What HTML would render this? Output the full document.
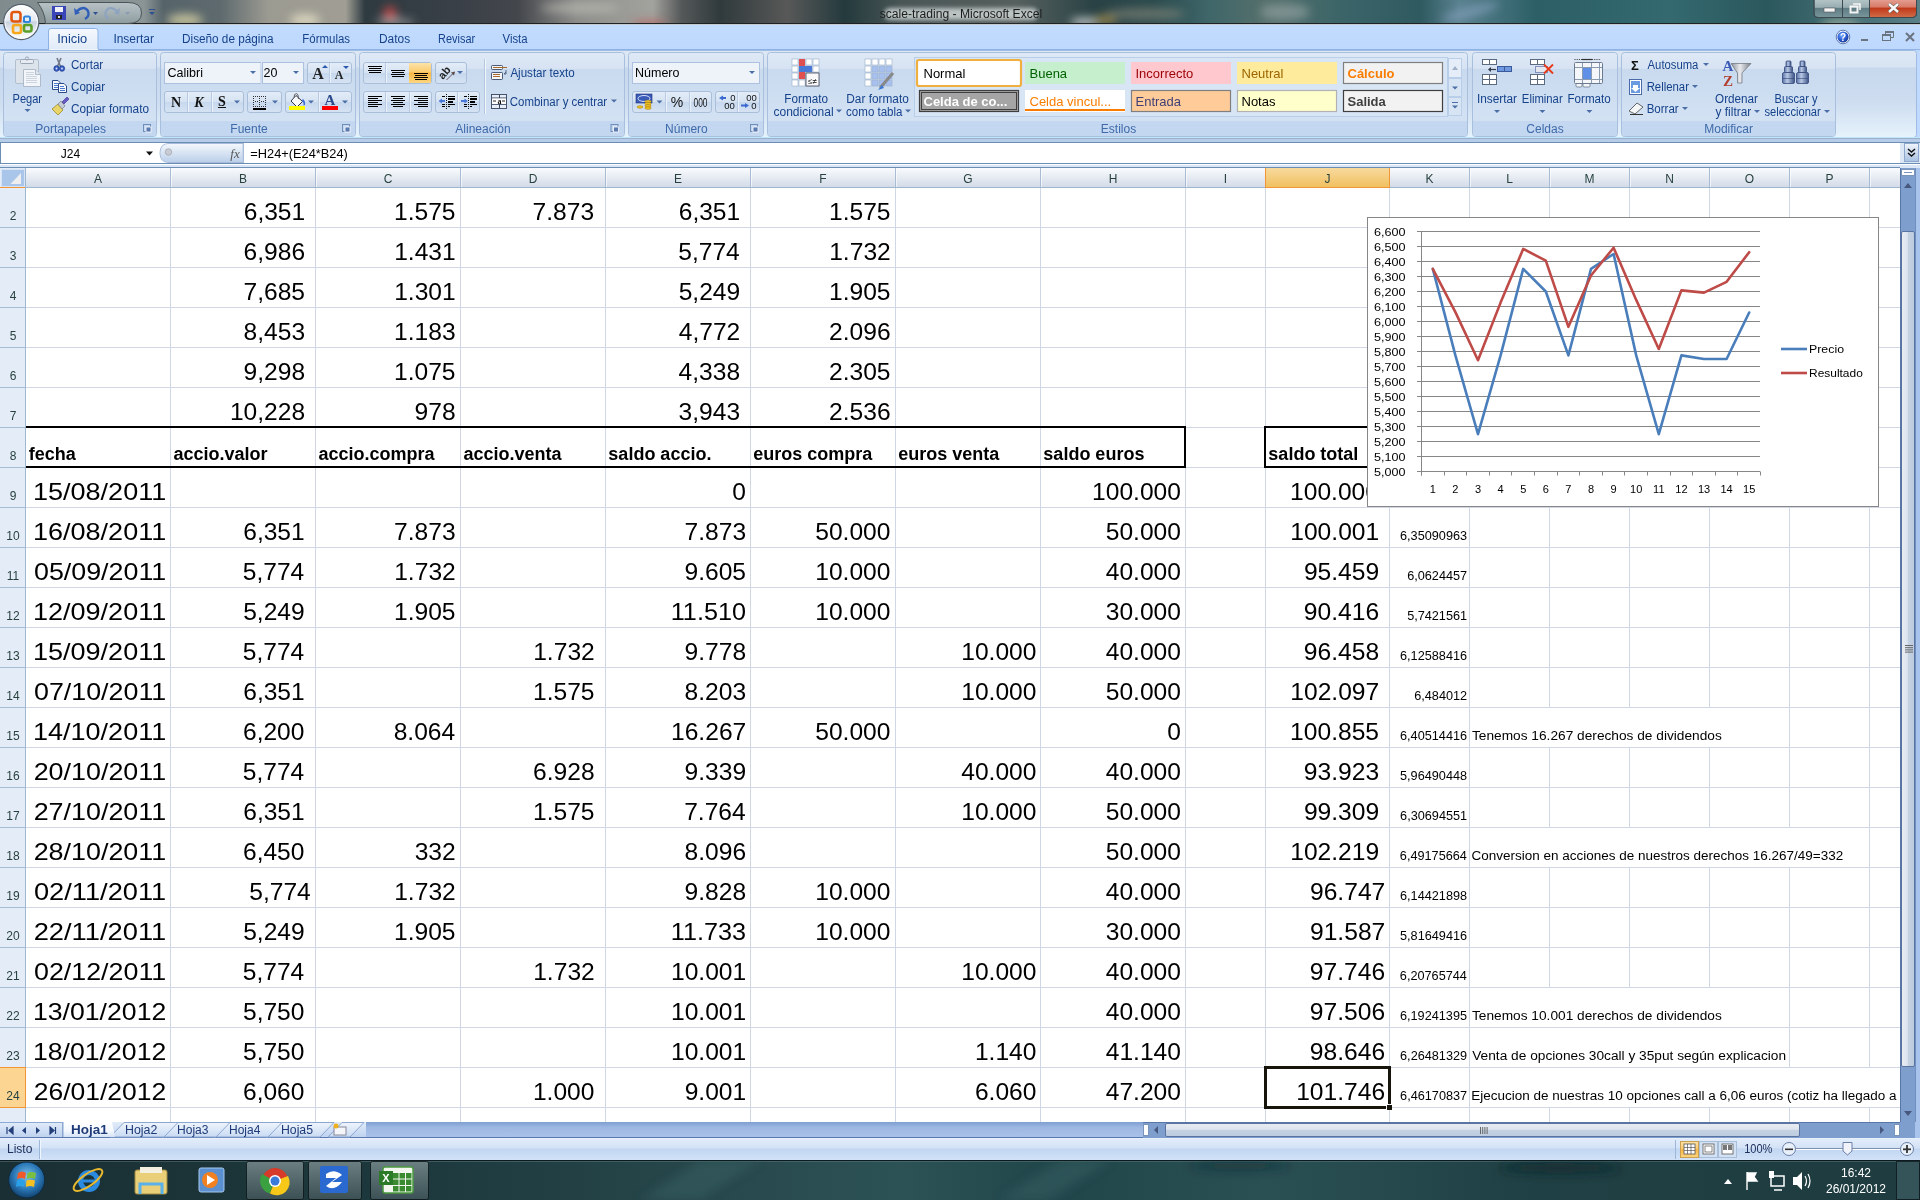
<!DOCTYPE html><html><head><meta charset="utf-8"><title>scale-trading - Microsoft Excel</title>
<style>html,body{margin:0;padding:0;width:1920px;height:1200px;overflow:hidden;background:#fff}svg{display:block;font-family:"Liberation Sans",sans-serif}</style></head><body>
<svg width="1920" height="1200" viewBox="0 0 1920 1200">
<defs>
<linearGradient id="gTitle" x1="0" y1="0" x2="1" y2="0">
 <stop offset="0" stop-color="#5f6b6d"/><stop offset="0.06" stop-color="#7d8888"/><stop offset="0.12" stop-color="#8d9490"/>
 <stop offset="0.2" stop-color="#3c4243"/><stop offset="0.3" stop-color="#4a4f50"/><stop offset="0.45" stop-color="#2b2f31"/>
 <stop offset="0.6" stop-color="#2a3a3d"/><stop offset="0.75" stop-color="#3c6a72"/><stop offset="0.85" stop-color="#356069"/>
 <stop offset="1" stop-color="#2a5058"/></linearGradient>
<linearGradient id="gGroup" x1="0" y1="0" x2="0" y2="1">
 <stop offset="0" stop-color="#DFE9F6"/><stop offset="0.19" stop-color="#D7E3F3"/><stop offset="0.2" stop-color="#C9DAEF"/>
 <stop offset="1" stop-color="#D6E4F4"/></linearGradient>
<linearGradient id="gTab" x1="0" y1="0" x2="0" y2="1">
 <stop offset="0" stop-color="#F5F9FE"/><stop offset="1" stop-color="#E0EAF7"/></linearGradient>
<linearGradient id="gColHdr" x1="0" y1="0" x2="0" y2="1">
 <stop offset="0" stop-color="#F9FBFD"/><stop offset="1" stop-color="#D3DBE8"/></linearGradient>
<linearGradient id="gColSel" x1="0" y1="0" x2="0" y2="1">
 <stop offset="0" stop-color="#F9DA9E"/><stop offset="1" stop-color="#F0C060"/></linearGradient>
<linearGradient id="gBox" x1="0" y1="0" x2="0" y2="1">
 <stop offset="0" stop-color="#F2F6FC"/><stop offset="1" stop-color="#E6EEF8"/></linearGradient>
<linearGradient id="gBtn" x1="0" y1="0" x2="0" y2="1">
 <stop offset="0" stop-color="#E4EDF8"/><stop offset="0.5" stop-color="#D5E2F2"/><stop offset="0.51" stop-color="#C7D8EE"/><stop offset="1" stop-color="#D6E3F3"/></linearGradient>
<linearGradient id="gOrange" x1="0" y1="0" x2="0" y2="1">
 <stop offset="0" stop-color="#FDE3A8"/><stop offset="0.45" stop-color="#FBCB6E"/><stop offset="0.5" stop-color="#F9B644"/><stop offset="1" stop-color="#FCD680"/></linearGradient>
<linearGradient id="gStatus" x1="0" y1="0" x2="0" y2="1">
 <stop offset="0" stop-color="#E4EEFB"/><stop offset="0.45" stop-color="#D3E2F6"/><stop offset="0.5" stop-color="#C1D6F2"/><stop offset="1" stop-color="#D2E2F7"/></linearGradient>
<linearGradient id="gSheetBar" x1="0" y1="0" x2="0" y2="1">
 <stop offset="0" stop-color="#A9C4E8"/><stop offset="1" stop-color="#97B6E0"/></linearGradient>
<linearGradient id="gThumbV" x1="0" y1="0" x2="1" y2="0">
 <stop offset="0" stop-color="#E9EDF2"/><stop offset="0.45" stop-color="#DDE4EE"/><stop offset="0.5" stop-color="#C5D2E3"/><stop offset="1" stop-color="#BCCBDF"/></linearGradient>
<linearGradient id="gThumbH" x1="0" y1="0" x2="0" y2="1">
 <stop offset="0" stop-color="#E9EDF2"/><stop offset="0.45" stop-color="#DDE4EE"/><stop offset="0.5" stop-color="#C5D2E3"/><stop offset="1" stop-color="#BCCBDF"/></linearGradient>
<linearGradient id="gTask" x1="0" y1="0" x2="1" y2="0">
 <stop offset="0" stop-color="#1a2f33"/><stop offset="0.22" stop-color="#1d393d"/><stop offset="0.38" stop-color="#28494d"/><stop offset="0.47" stop-color="#2c5256"/><stop offset="0.55" stop-color="#21464a"/><stop offset="0.66" stop-color="#2a5054"/><stop offset="0.8" stop-color="#1f4044"/><stop offset="1" stop-color="#1f3c40"/></linearGradient>
<linearGradient id="gTaskBtn" x1="0" y1="0" x2="0" y2="1">
 <stop offset="0" stop-color="#8e9ea0" stop-opacity="0.7"/><stop offset="1" stop-color="#4a5c60" stop-opacity="0.7"/></linearGradient>
<radialGradient id="gOrb" cx="0.5" cy="0.4" r="0.6">
 <stop offset="0" stop-color="#ffffff"/><stop offset="0.7" stop-color="#e8eef2"/><stop offset="1" stop-color="#a6b2bc"/></radialGradient>
<radialGradient id="gWinOrb" cx="0.5" cy="0.4" r="0.6">
 <stop offset="0" stop-color="#7fc4ea"/><stop offset="0.6" stop-color="#2a78b8"/><stop offset="1" stop-color="#12426e"/></radialGradient>
</defs>
<filter id="fBlur" x="-20%" y="-100%" width="140%" height="300%"><feGaussianBlur stdDeviation="5"/></filter>
<filter id="fBlur2" x="-20%" y="-100%" width="140%" height="300%"><feGaussianBlur stdDeviation="3"/></filter>
<clipPath id="clipTitle"><rect x="0" y="0" width="1920" height="23"/></clipPath>
<linearGradient id="gTitle2" x1="0" y1="0" x2="1" y2="0"><stop offset="0" stop-color="#7f8b8d"/><stop offset="0.075" stop-color="#8b9596"/><stop offset="0.085" stop-color="#56646a"/><stop offset="0.115" stop-color="#5e6a6e"/><stop offset="0.14" stop-color="#9c9b92"/><stop offset="0.18" stop-color="#a09e94"/><stop offset="0.19" stop-color="#2e3b41"/><stop offset="0.24" stop-color="#3a4047"/><stop offset="0.27" stop-color="#44474c"/><stop offset="0.3" stop-color="#8c8c8a"/><stop offset="0.34" stop-color="#a3a39e"/><stop offset="0.355" stop-color="#555859"/><stop offset="0.375" stop-color="#303a3c"/><stop offset="0.41" stop-color="#585858"/><stop offset="0.44" stop-color="#243a3d"/><stop offset="0.47" stop-color="#4a5656"/><stop offset="0.53" stop-color="#56605e"/><stop offset="0.57" stop-color="#2a4245"/><stop offset="0.6" stop-color="#2b4a4d"/><stop offset="0.63" stop-color="#3f6669"/><stop offset="0.66" stop-color="#56706c"/><stop offset="0.7" stop-color="#3a6468"/><stop offset="0.74" stop-color="#2f5a60"/><stop offset="0.76" stop-color="#5a8290"/><stop offset="0.8" stop-color="#2c5f66"/><stop offset="0.87" stop-color="#33696f"/><stop offset="0.92" stop-color="#2b585d"/><stop offset="1" stop-color="#5a8088"/></linearGradient>
<rect x="0" y="0" width="1920" height="24" fill="url(#gTitle2)" />
<g clip-path="url(#clipTitle)">
<g filter="url(#fBlur)">
<ellipse cx="185" cy="20" rx="18" ry="6" fill="#e0d8a8" opacity="0.8"/>
<ellipse cx="305" cy="20" rx="15" ry="6" fill="#e8e4c8" opacity="0.8"/>
<ellipse cx="390" cy="14" rx="7" ry="8" fill="#c04848" opacity="0.9"/>
<ellipse cx="395" cy="22" rx="20" ry="3" fill="#e8e0e0" opacity="0.6"/>
<ellipse cx="650" cy="24" rx="18" ry="3" fill="#c04040" opacity="0.7"/>
<ellipse cx="580" cy="8" rx="40" ry="5" fill="#c8c8c0" opacity="0.6"/>
<ellipse cx="1085" cy="22" rx="15" ry="4" fill="#f0f0f0" opacity="0.8"/>
<ellipse cx="1105" cy="20" rx="12" ry="5" fill="#c8a040" opacity="0.6"/>
<ellipse cx="1145" cy="14" rx="40" ry="6" fill="#a09a88" opacity="0.5"/>
<ellipse cx="1285" cy="12" rx="25" ry="8" fill="#90a0a0" opacity="0.7"/>
<ellipse cx="1470" cy="12" rx="30" ry="4" fill="#90a8c8" opacity="0.7" transform="rotate(-15 1470 12)"/>
<ellipse cx="1840" cy="24" rx="20" ry="3" fill="#e0e0c0" opacity="0.8"/>
</g>
</g>
<rect x="0" y="23" width="1920" height="1" fill="#1c2226" />
<rect x="0" y="24" width="1920" height="1" fill="#c4ccd2" />
<linearGradient id="gQat" x1="0" y1="0" x2="0" y2="1"><stop offset="0" stop-color="#b8c2c6"/><stop offset="0.5" stop-color="#a3b0b4"/><stop offset="1" stop-color="#8e9ca0"/></linearGradient>
<path d="M37.5 2.5 H128 Q141.5 2.5 141.5 13 Q141.5 23.5 128 23.5 H45.5 Q45 12 37.5 2.5 Z" fill="url(#gQat)" stroke="#4a5558" stroke-width="1"/>
<rect x="52" y="6" width="14" height="14" fill="#3a45b8" />
<rect x="55" y="7" width="8" height="5" fill="#f0f0f8" />
<rect x="56" y="15" width="6" height="4" fill="#222" />
<rect x="58" y="16" width="2" height="2" fill="#ddd" />
<path d="M77 11 Q84 5 88 11 Q90 16 85 19" fill="none" stroke="#2f5fb8" stroke-width="2.4"/><path d="M74 8 L80 13 L75 15 Z" fill="#2f5fb8"/>
<path d="M93 12 L98 12 L95.5 15 Z" fill="#2f4f8f"/>
<path d="M117 11 Q110 5 106 11 Q104 16 109 19" fill="none" stroke="#8ea3c0" stroke-width="2.2"/><path d="M120 8 L114 13 L119 15 Z" fill="#8ea3c0"/>
<path d="M125 12 L130 12 L127.5 15 Z" fill="#8a9ab0"/>
<rect x="149" y="9" width="6" height="1" fill="#2f4f8f" />
<path d="M149 12 L155 12 L152 15 Z" fill="#2f4f8f"/>
<filter id="fGlow" x="-10%" y="-100%" width="120%" height="300%"><feGaussianBlur stdDeviation="2.2"/></filter>
<g filter="url(#fGlow)" opacity="0.75"><rect x="884" y="8" width="154" height="12" rx="6" fill="#dfe6e6"/></g>
<text x="879.68" y="18" font-size="12" fill="#1b1b1b" textLength="162.60" lengthAdjust="spacingAndGlyphs">scale-trading  -  Microsoft Excel</text>
<linearGradient id="gWc" x1="0" y1="0" x2="0" y2="1"><stop offset="0" stop-color="#b6c6c8"/><stop offset="0.45" stop-color="#98aeb2"/><stop offset="0.5" stop-color="#5f7c84"/><stop offset="1" stop-color="#7a969c"/></linearGradient>
<linearGradient id="gWcX" x1="0" y1="0" x2="0" y2="1"><stop offset="0" stop-color="#e4a294"/><stop offset="0.45" stop-color="#d87a68"/><stop offset="0.5" stop-color="#c03818"/><stop offset="1" stop-color="#d06a48"/></linearGradient>
<path d="M1814 -1 V13 Q1814 17.5 1818.5 17.5 H1912 Q1916.5 17.5 1916.5 13 V-1 Z" fill="url(#gWc)" stroke="#3c4a50"/>
<path d="M1869.5 -1 V17 H1912 Q1916 17 1916 13 V-1 Z" fill="url(#gWcX)"/>
<rect x="1842" y="0" width="1" height="17" fill="#3c4a50" />
<rect x="1869" y="0" width="1" height="17" fill="#3c4a50" />
<path d="M1814 -1 V13 Q1814 17.5 1818.5 17.5 H1912 Q1916.5 17.5 1916.5 13 V-1" fill="none" stroke="#3c4a50"/>
<rect x="1824" y="8" width="11" height="4" fill="#f4f4f4" stroke="#555" stroke-width="0.6"/>
<rect x="1850.5" y="6.5" width="7" height="6" fill="none" stroke="#f4f4f4" stroke-width="2"/><path d="M1853 4 H1860 V10" fill="none" stroke="#f4f4f4" stroke-width="1.6"/>
<path d="M1889 4 L1898 12 M1898 4 L1889 12" stroke="#555" stroke-width="3.6"/><path d="M1889 4 L1898 12 M1898 4 L1889 12" stroke="#fafafa" stroke-width="2.4"/>
<linearGradient id="gTabRow" x1="0" y1="0" x2="0" y2="1"><stop offset="0" stop-color="#C2DCFE"/><stop offset="1" stop-color="#BDD8FD"/></linearGradient>
<rect x="0" y="25" width="1920" height="25" fill="url(#gTabRow)" />
<rect x="0" y="49" width="1920" height="1" fill="#8DB2E3" />
<linearGradient id="gOrb2" x1="0" y1="0" x2="0" y2="1"><stop offset="0" stop-color="#ffffff"/><stop offset="0.45" stop-color="#e6ebf2"/><stop offset="0.5" stop-color="#c8d2e0"/><stop offset="0.8" stop-color="#eef1f6"/><stop offset="1" stop-color="#ffffff"/></linearGradient>
<circle cx="21.25" cy="22" r="17.6" fill="url(#gOrb2)" stroke="#55606c" stroke-width="1.2"/>
<circle cx="21.25" cy="22" r="16.3" fill="none" stroke="#ffffff" stroke-width="1" opacity="0.8"/>
<rect x="11.5" y="12" width="9" height="9.5" rx="2.5" fill="none" stroke="#e2560e" stroke-width="2.6"/>
<rect x="24" y="16.5" width="6" height="5.5" rx="1.5" fill="none" stroke="#2f86dc" stroke-width="2"/>
<rect x="13" y="25" width="8" height="8" rx="2" fill="none" stroke="#f6a81a" stroke-width="2.6"/>
<rect x="24" y="25" width="7.5" height="6.5" rx="2" fill="none" stroke="#5aa02a" stroke-width="2.6"/>
<circle cx="20.5" cy="21.5" r="1.1" fill="#e8501a"/><circle cx="24" cy="21.5" r="1.1" fill="#2a78d0"/><circle cx="20.5" cy="25" r="1.1" fill="#f0b030"/><circle cx="24.5" cy="25" r="1.1" fill="#50a020"/>
<path d="M48.5 50 V31 Q48.5 28.5 51 28.5 H95.5 Q98 28.5 98 31 V50" fill="url(#gTab)" stroke="#8DB2E3"/>
<rect x="49" y="49" width="49" height="2" fill="#F0F5FC" />
<text x="57.22" y="43" font-size="12" fill="#15428B" textLength="29.92" lengthAdjust="spacingAndGlyphs">Inicio</text>
<text x="113.39" y="43" font-size="12" fill="#15428B" textLength="40.60" lengthAdjust="spacingAndGlyphs">Insertar</text>
<text x="182.04" y="43" font-size="12" fill="#15428B" textLength="91.46" lengthAdjust="spacingAndGlyphs">Diseño de página</text>
<text x="302.36" y="43" font-size="12" fill="#15428B" textLength="47.65" lengthAdjust="spacingAndGlyphs">Fórmulas</text>
<text x="379.02" y="43" font-size="12" fill="#15428B" textLength="31.11" lengthAdjust="spacingAndGlyphs">Datos</text>
<text x="438.10" y="43" font-size="12" fill="#15428B" textLength="37.08" lengthAdjust="spacingAndGlyphs">Revisar</text>
<text x="502.55" y="43" font-size="12" fill="#15428B" textLength="24.95" lengthAdjust="spacingAndGlyphs">Vista</text>
<radialGradient id="gHelp" cx="0.4" cy="0.35" r="0.7"><stop offset="0" stop-color="#7ab0ff"/><stop offset="0.6" stop-color="#2a5ad0"/><stop offset="1" stop-color="#16348a"/></radialGradient>
<circle cx="1843" cy="37" r="6.8" fill="#ffffff" stroke="#3a5a9a" stroke-width="0.8"/>
<circle cx="1843" cy="37" r="5.6" fill="url(#gHelp)"/>
<text x="1843" y="41" font-size="10" font-weight="bold" fill="#fff" text-anchor="middle">?</text>
<rect x="1861" y="39" width="7" height="2" fill="#6a7480" />
<rect x="1882.5" y="34.5" width="8" height="6" fill="none" stroke="#6a7480" stroke-width="1"/><rect x="1882" y="34" width="9" height="2" fill="#6a7480"/>
<path d="M1885.5 34 V31.5 H1893.5 V37.5 H1891" fill="none" stroke="#6a7480" stroke-width="1"/><rect x="1885" y="31" width="9" height="2" fill="#6a7480"/>
<path d="M1906 33 L1914 41 M1914 33 L1906 41" stroke="#6a7480" stroke-width="2"/>
<linearGradient id="gRib" x1="0" y1="0" x2="0" y2="1"><stop offset="0" stop-color="#DEE8F5"/><stop offset="0.19" stop-color="#D8E4F3"/><stop offset="0.2" stop-color="#C7D8ED"/><stop offset="0.6" stop-color="#CEDDF0"/><stop offset="1" stop-color="#E6F3FC"/></linearGradient>
<rect x="0" y="50" width="1920" height="88" fill="#BFDAFE" />
<rect x="-2.5" y="50.5" width="1919" height="87" rx="3" fill="url(#gRib)" stroke="#9EBCE4"/>
<rect x="0" y="137" width="1920" height="1" fill="#BFE6FB" />
<rect x="0" y="138" width="1920" height="1" fill="#9BB0CB" />
<rect x="0" y="139" width="1920" height="3" fill="#B6CCE9" />
<rect x="3.5" y="52.5" width="153" height="84" rx="3" fill="url(#gGroup)" stroke="#A8C0DD"/>
<path d="M4 121 H156 V133 Q156 136 153 136 H7 Q4 136 4 133 Z" fill="#C3D7F0"/>
<text x="70.6" y="133" font-size="12" text-anchor="middle" fill="#3E6AAA" >Portapapeles</text>
<rect x="143.5" y="124.5" width="7" height="7" fill="none" stroke="#6f8fb8" stroke-width="1"/><rect x="146" y="127" width="5" height="5" fill="#5a7ab0" stroke="#fff" stroke-width="0.8"/>
<rect x="160.5" y="52.5" width="195" height="84" rx="3" fill="url(#gGroup)" stroke="#A8C0DD"/>
<path d="M161 121 H355 V133 Q355 136 352 136 H164 Q161 136 161 133 Z" fill="#C3D7F0"/>
<text x="249" y="133" font-size="12" text-anchor="middle" fill="#3E6AAA" >Fuente</text>
<rect x="342.5" y="124.5" width="7" height="7" fill="none" stroke="#6f8fb8" stroke-width="1"/><rect x="345" y="127" width="5" height="5" fill="#5a7ab0" stroke="#fff" stroke-width="0.8"/>
<rect x="359.5" y="52.5" width="265" height="84" rx="3" fill="url(#gGroup)" stroke="#A8C0DD"/>
<path d="M360 121 H624 V133 Q624 136 621 136 H363 Q360 136 360 133 Z" fill="#C3D7F0"/>
<text x="483" y="133" font-size="12" text-anchor="middle" fill="#3E6AAA" >Alineación</text>
<rect x="611.0" y="124.5" width="7" height="7" fill="none" stroke="#6f8fb8" stroke-width="1"/><rect x="613.5" y="127" width="5" height="5" fill="#5a7ab0" stroke="#fff" stroke-width="0.8"/>
<rect x="628.5" y="52.5" width="135" height="84" rx="3" fill="url(#gGroup)" stroke="#A8C0DD"/>
<path d="M629 121 H763 V133 Q763 136 760 136 H632 Q629 136 629 133 Z" fill="#C3D7F0"/>
<text x="686.4" y="133" font-size="12" text-anchor="middle" fill="#3E6AAA" >Número</text>
<rect x="750.5" y="124.5" width="7" height="7" fill="none" stroke="#6f8fb8" stroke-width="1"/><rect x="753" y="127" width="5" height="5" fill="#5a7ab0" stroke="#fff" stroke-width="0.8"/>
<rect x="767.5" y="52.5" width="700" height="84" rx="3" fill="url(#gGroup)" stroke="#A8C0DD"/>
<path d="M768 121 H1467 V133 Q1467 136 1464 136 H771 Q768 136 768 133 Z" fill="#C3D7F0"/>
<text x="1118.5" y="133" font-size="12" text-anchor="middle" fill="#3E6AAA" >Estilos</text>
<rect x="1472.5" y="52.5" width="145" height="84" rx="3" fill="url(#gGroup)" stroke="#A8C0DD"/>
<path d="M1473 121 H1617 V133 Q1617 136 1614 136 H1476 Q1473 136 1473 133 Z" fill="#C3D7F0"/>
<text x="1545" y="133" font-size="12" text-anchor="middle" fill="#3E6AAA" >Celdas</text>
<rect x="1621.5" y="52.5" width="214" height="84" rx="3" fill="url(#gGroup)" stroke="#A8C0DD"/>
<path d="M1622 121 H1835 V133 Q1835 136 1832 136 H1625 Q1622 136 1622 133 Z" fill="#C3D7F0"/>
<text x="1728.6" y="133" font-size="12" text-anchor="middle" fill="#3E6AAA" >Modificar</text>
<rect x="15.5" y="59.5" width="23" height="24" rx="1.5" fill="#dde3eb" stroke="#b4bfcd"/>
<rect x="20.5" y="59.5" width="13" height="4" rx="1" fill="#e8ecf2" stroke="#9aa6b6"/><circle cx="27" cy="58.5" r="1.6" fill="none" stroke="#9aa6b6"/>
<path d="M23.5 69.5 H35.5 L40.5 74.5 V86.5 H23.5 Z" fill="#f2f5fa" stroke="#b0bbc9"/>
<path d="M35.5 69.5 V74.5 H40.5" fill="#dfe5ee" stroke="#b0bbc9"/>
<rect x="26" y="72" width="8" height="1" fill="#cdd4de" />
<rect x="26" y="74" width="8" height="1" fill="#cdd4de" />
<rect x="26" y="76" width="11" height="1" fill="#cdd4de" />
<rect x="26" y="78" width="11" height="1" fill="#cdd4de" />
<rect x="26" y="80" width="11" height="1" fill="#cdd4de" />
<rect x="26" y="82" width="11" height="1" fill="#cdd4de" />
<text x="12.49" y="103" font-size="12" fill="#15428B" textLength="29.59" lengthAdjust="spacingAndGlyphs">Pegar</text>
<path d="M24.5 109 L30.5 109 L27.5 112 Z" fill="#4b6ea6"/>
<path d="M56 70 L61 58 M62 70 L57 58" stroke="#707a86" stroke-width="1.6"/>
<ellipse cx="56.5" cy="68.5" rx="2.6" ry="2.8" fill="#3a5fc8" stroke="#1e3a8a" stroke-width="0.8"/><ellipse cx="62" cy="68.5" rx="2.6" ry="2.8" fill="#3a5fc8" stroke="#1e3a8a" stroke-width="0.8"/>
<circle cx="56.5" cy="68.5" r="0.9" fill="#dde6f5"/><circle cx="62" cy="68.5" r="0.9" fill="#dde6f5"/>
<text x="71.01" y="69" font-size="12" fill="#15428B" textLength="32.18" lengthAdjust="spacingAndGlyphs">Cortar</text>
<path d="M52.5 80.5 H58 L60.5 83 V89.5 H52.5 Z" fill="#f6f8fb" stroke="#2a4a88"/>
<rect x="54" y="83" width="4" height="1" fill="#4a7ad0" />
<rect x="54" y="85" width="5" height="1" fill="#4a7ad0" />
<rect x="54" y="87" width="5" height="1" fill="#4a7ad0" />
<path d="M58.5 83.5 H64 L66.5 86 V92.5 H58.5 Z" fill="#f6f8fb" stroke="#2a4a88"/>
<rect x="60" y="86" width="4" height="1" fill="#4a7ad0" />
<rect x="60" y="88" width="5" height="1" fill="#4a7ad0" />
<rect x="60" y="90" width="5" height="1" fill="#4a7ad0" />
<text x="71.01" y="90.6" font-size="12" fill="#15428B" textLength="34.18" lengthAdjust="spacingAndGlyphs">Copiar</text>
<path d="M52 109 L58 104 L63 110 L58 115 Z" fill="#e8d468" stroke="#9a8a30" stroke-width="0.8"/>
<path d="M58 104 L61 101 L65 106 L62 109 Z" fill="#c8ccd4" stroke="#6a707a" stroke-width="0.6"/>
<path d="M62 102 L67 97 L69 99 L64 104 Z" fill="#6a5ac8" stroke="#3a2a88" stroke-width="0.6"/>
<text x="71.00" y="112.5" font-size="12" fill="#15428B" textLength="77.99" lengthAdjust="spacingAndGlyphs">Copiar formato</text>
<rect x="164.5" y="62.5" width="96" height="21" fill="#EEF3FA" stroke="#ABC1DE"/>
<text x="167.5" y="77" font-size="12.5" >Calibri</text>
<rect x="260" y="63" width="1" height="20" fill="#D0DCEC" />
<path d="M250 71.0 L256 71.0 L253 74.0 Z" fill="#4b6ea6"/>
<rect x="262.5" y="62.5" width="41" height="21" fill="#EEF3FA" stroke="#ABC1DE"/>
<text x="263.5" y="77" font-size="12.5" >20</text>
<path d="M293 71.0 L299 71.0 L296 74.0 Z" fill="#4b6ea6"/>
<rect x="307.5" y="62.5" width="44" height="21" rx="2.5" fill="url(#gBtn)" stroke="#A9BFD9"/>
<rect x="329" y="63" width="1" height="20" fill="#B8CBE2" />
<rect x="330" y="63" width="1" height="20" fill="#EAF1FA" />
<text x="318" y="79" font-size="16" font-family="Liberation Serif" font-weight="bold" text-anchor="middle" fill="#222">A</text>
<path d="M322 68 L325 65 L328 68 Z" fill="#2a5ab0"/>
<text x="339" y="79" font-size="12" font-family="Liberation Serif" font-weight="bold" text-anchor="middle" fill="#222">A</text>
<path d="M343 66 L349 66 L346 69 Z" fill="#2a5ab0"/>
<rect x="164.5" y="91.5" width="79" height="21" rx="2.5" fill="url(#gBtn)" stroke="#A9BFD9"/>
<rect x="187" y="92" width="1" height="20" fill="#B8CBE2" />
<rect x="188" y="92" width="1" height="20" fill="#EAF1FA" />
<rect x="211" y="92" width="1" height="20" fill="#B8CBE2" />
<rect x="212" y="92" width="1" height="20" fill="#EAF1FA" />
<text x="176" y="107" font-size="14" font-family="Liberation Serif" font-weight="bold" text-anchor="middle" fill="#111">N</text>
<text x="199" y="107" font-size="14" font-family="Liberation Serif" font-weight="bold" font-style="italic" text-anchor="middle" fill="#111">K</text>
<text x="222" y="106" font-size="14" font-family="Liberation Serif" font-weight="bold" text-anchor="middle" fill="#111">S</text>
<rect x="218" y="107" width="8" height="1" fill="#111" />
<path d="M234 100.5 L240 100.5 L237 103.5 Z" fill="#4b6ea6"/>
<rect x="247.5" y="91.5" width="34" height="21" rx="2.5" fill="url(#gBtn)" stroke="#A9BFD9"/>
<rect x="253" y="96" width="1" height="1" fill="#333" />
<rect x="253" y="106" width="1" height="1" fill="#333" />
<rect x="255" y="96" width="1" height="1" fill="#333" />
<rect x="255" y="106" width="1" height="1" fill="#333" />
<rect x="257" y="96" width="1" height="1" fill="#333" />
<rect x="257" y="106" width="1" height="1" fill="#333" />
<rect x="259" y="96" width="1" height="1" fill="#333" />
<rect x="259" y="106" width="1" height="1" fill="#333" />
<rect x="261" y="96" width="1" height="1" fill="#333" />
<rect x="261" y="106" width="1" height="1" fill="#333" />
<rect x="263" y="96" width="1" height="1" fill="#333" />
<rect x="263" y="106" width="1" height="1" fill="#333" />
<rect x="265" y="96" width="1" height="1" fill="#333" />
<rect x="265" y="106" width="1" height="1" fill="#333" />
<rect x="253" y="98" width="1" height="1" fill="#333" />
<rect x="259" y="98" width="1" height="1" fill="#333" />
<rect x="265" y="98" width="1" height="1" fill="#333" />
<rect x="253" y="100" width="1" height="1" fill="#333" />
<rect x="259" y="100" width="1" height="1" fill="#333" />
<rect x="265" y="100" width="1" height="1" fill="#333" />
<rect x="253" y="102" width="1" height="1" fill="#333" />
<rect x="259" y="102" width="1" height="1" fill="#333" />
<rect x="265" y="102" width="1" height="1" fill="#333" />
<rect x="253" y="104" width="1" height="1" fill="#333" />
<rect x="259" y="104" width="1" height="1" fill="#333" />
<rect x="265" y="104" width="1" height="1" fill="#333" />
<rect x="255" y="101" width="1" height="1" fill="#333" />
<rect x="257" y="101" width="1" height="1" fill="#333" />
<rect x="261" y="101" width="1" height="1" fill="#333" />
<rect x="263" y="101" width="1" height="1" fill="#333" />
<rect x="253" y="108" width="13" height="2" fill="#000" />
<path d="M272 100.5 L278 100.5 L275 103.5 Z" fill="#4b6ea6"/>
<rect x="285.5" y="91.5" width="66" height="21" rx="2.5" fill="url(#gBtn)" stroke="#A9BFD9"/>
<rect x="318" y="92" width="1" height="20" fill="#B8CBE2" />
<rect x="319" y="92" width="1" height="20" fill="#EAF1FA" />
<path d="M296 95.5 L302.5 101.5 L297 107 L291 101 Z" fill="#f8f9fb" stroke="#223" stroke-width="0.9"/>
<path d="M294 97.5 Q294 93.5 296.5 93.5 Q298.5 93.5 298.5 99" fill="none" stroke="#555" stroke-width="0.9"/>
<path d="M302.5 99 Q305.5 100 305 105 L303.5 105.5 Q304 102 302 101.5 Z" fill="#3a6ad8"/>
<rect x="289" y="106" width="16" height="4" fill="#FFFF00" />
<path d="M308 100.5 L314 100.5 L311 103.5 Z" fill="#4b6ea6"/>
<text x="330" y="105" font-size="15" font-family="Liberation Serif" font-weight="bold" text-anchor="middle" fill="#2a4a8c">A</text>
<rect x="322" y="106" width="16" height="4" fill="#FF0000" />
<path d="M342 100.5 L348 100.5 L345 103.5 Z" fill="#4b6ea6"/>
<rect x="363.5" y="62.5" width="68" height="21" rx="2.5" fill="url(#gBtn)" stroke="#A9BFD9"/>
<rect x="385" y="63" width="1" height="20" fill="#B8CBE2" />
<rect x="386" y="63" width="1" height="20" fill="#EAF1FA" />
<rect x="409" y="63" width="1" height="20" fill="#B8CBE2" />
<rect x="410" y="63" width="1" height="20" fill="#EAF1FA" />
<rect x="409" y="63" width="22" height="20" fill="url(#gOrange)" />
<rect x="368" y="66" width="14" height="1" fill="#000" shape-rendering="crispEdges"/>
<rect x="391" y="70" width="14" height="1" fill="#000" shape-rendering="crispEdges"/>
<rect x="414" y="73" width="14" height="1" fill="#000" shape-rendering="crispEdges"/>
<rect x="369" y="68" width="12" height="1" fill="#000" shape-rendering="crispEdges"/>
<rect x="392" y="72" width="12" height="1" fill="#000" shape-rendering="crispEdges"/>
<rect x="415" y="75" width="12" height="1" fill="#000" shape-rendering="crispEdges"/>
<rect x="368" y="70" width="14" height="1" fill="#000" shape-rendering="crispEdges"/>
<rect x="391" y="74" width="14" height="1" fill="#000" shape-rendering="crispEdges"/>
<rect x="414" y="77" width="14" height="1" fill="#000" shape-rendering="crispEdges"/>
<rect x="369" y="72" width="12" height="1" fill="#000" shape-rendering="crispEdges"/>
<rect x="392" y="76" width="12" height="1" fill="#000" shape-rendering="crispEdges"/>
<rect x="415" y="79" width="12" height="1" fill="#000" shape-rendering="crispEdges"/>
<rect x="435.5" y="62.5" width="31" height="21" rx="2.5" fill="url(#gBtn)" stroke="#A9BFD9"/>
<text x="0" y="0" font-size="11" font-weight="bold" fill="#222" transform="translate(443 80) rotate(-50)">ab</text>
<path d="M446.5 80 L454 72.5" stroke="#5a4a4a" stroke-width="0.9"/><path d="M455 71.5 L451 72.5 L454 75.5 Z" fill="#5a4a4a"/>
<path d="M457 71.0 L463 71.0 L460 74.0 Z" fill="#4b6ea6"/>
<rect x="363.5" y="91.5" width="68" height="21" rx="2.5" fill="url(#gBtn)" stroke="#A9BFD9"/>
<rect x="385" y="92" width="1" height="20" fill="#B8CBE2" />
<rect x="386" y="92" width="1" height="20" fill="#EAF1FA" />
<rect x="409" y="92" width="1" height="20" fill="#B8CBE2" />
<rect x="410" y="92" width="1" height="20" fill="#EAF1FA" />
<rect x="368" y="96" width="14" height="1" fill="#000" shape-rendering="crispEdges"/>
<rect x="391" y="96" width="14" height="1" fill="#000" shape-rendering="crispEdges"/>
<rect x="414" y="96" width="14" height="1" fill="#000" shape-rendering="crispEdges"/>
<rect x="368" y="98" width="10" height="1" fill="#000" shape-rendering="crispEdges"/>
<rect x="393" y="98" width="10" height="1" fill="#000" shape-rendering="crispEdges"/>
<rect x="418" y="98" width="10" height="1" fill="#000" shape-rendering="crispEdges"/>
<rect x="368" y="100" width="14" height="1" fill="#000" shape-rendering="crispEdges"/>
<rect x="391" y="100" width="14" height="1" fill="#000" shape-rendering="crispEdges"/>
<rect x="414" y="100" width="14" height="1" fill="#000" shape-rendering="crispEdges"/>
<rect x="368" y="102" width="10" height="1" fill="#000" shape-rendering="crispEdges"/>
<rect x="393" y="102" width="10" height="1" fill="#000" shape-rendering="crispEdges"/>
<rect x="418" y="102" width="10" height="1" fill="#000" shape-rendering="crispEdges"/>
<rect x="368" y="104" width="14" height="1" fill="#000" shape-rendering="crispEdges"/>
<rect x="391" y="104" width="14" height="1" fill="#000" shape-rendering="crispEdges"/>
<rect x="414" y="104" width="14" height="1" fill="#000" shape-rendering="crispEdges"/>
<rect x="368" y="106" width="10" height="1" fill="#000" shape-rendering="crispEdges"/>
<rect x="393" y="106" width="10" height="1" fill="#000" shape-rendering="crispEdges"/>
<rect x="418" y="106" width="10" height="1" fill="#000" shape-rendering="crispEdges"/>
<rect x="435.5" y="91.5" width="44" height="21" rx="2.5" fill="url(#gBtn)" stroke="#A9BFD9"/>
<rect x="457" y="92" width="1" height="20" fill="#B8CBE2" />
<rect x="458" y="92" width="1" height="20" fill="#EAF1FA" />
<rect x="446" y="94" width="1" height="1" fill="#111" />
<rect x="446" y="96" width="1" height="1" fill="#111" />
<rect x="446" y="98" width="1" height="1" fill="#111" />
<rect x="446" y="100" width="1" height="1" fill="#111" />
<rect x="446" y="102" width="1" height="1" fill="#111" />
<rect x="446" y="104" width="1" height="1" fill="#111" />
<rect x="446" y="106" width="1" height="1" fill="#111" />
<rect x="446" y="108" width="1" height="1" fill="#111" />
<rect x="442" y="96" width="3" height="1" fill="#000" shape-rendering="crispEdges"/>
<rect x="448" y="96" width="7" height="1" fill="#000" shape-rendering="crispEdges"/>
<rect x="448" y="98" width="7" height="2" fill="#000" />
<rect x="448" y="101" width="5" height="2" fill="#000" />
<rect x="442" y="104" width="3" height="1" fill="#000" shape-rendering="crispEdges"/>
<rect x="448" y="104" width="7" height="1" fill="#000" shape-rendering="crispEdges"/>
<rect x="442" y="106" width="3" height="1" fill="#000" shape-rendering="crispEdges"/>
<rect x="448" y="106" width="2" height="1" fill="#000" shape-rendering="crispEdges"/>
<rect x="468" y="94" width="1" height="1" fill="#111" />
<rect x="468" y="96" width="1" height="1" fill="#111" />
<rect x="468" y="98" width="1" height="1" fill="#111" />
<rect x="468" y="100" width="1" height="1" fill="#111" />
<rect x="468" y="102" width="1" height="1" fill="#111" />
<rect x="468" y="104" width="1" height="1" fill="#111" />
<rect x="468" y="106" width="1" height="1" fill="#111" />
<rect x="468" y="108" width="1" height="1" fill="#111" />
<rect x="464" y="96" width="3" height="1" fill="#000" shape-rendering="crispEdges"/>
<rect x="470" y="96" width="7" height="1" fill="#000" shape-rendering="crispEdges"/>
<rect x="470" y="98" width="7" height="2" fill="#000" />
<rect x="470" y="101" width="5" height="2" fill="#000" />
<rect x="464" y="104" width="3" height="1" fill="#000" shape-rendering="crispEdges"/>
<rect x="470" y="104" width="7" height="1" fill="#000" shape-rendering="crispEdges"/>
<rect x="464" y="106" width="3" height="1" fill="#000" shape-rendering="crispEdges"/>
<rect x="470" y="106" width="2" height="1" fill="#000" shape-rendering="crispEdges"/>
<path d="M438.5 101 L442 98.5 V100 H445 V102 H442 V103.5 Z" fill="#4a78d8"/>
<path d="M468 101 L464.5 98.5 V100 H461 V102 H464.5 V103.5 Z" fill="#4a78d8" transform="translate(-0 0)"/>
<rect x="484" y="59" width="1" height="55" fill="#B3C6DF" />
<rect x="485" y="59" width="1" height="55" fill="#F2F7FC" />
<rect x="491.5" y="65.5" width="11" height="4" rx="0.8" fill="#f4f6fa" stroke="#3a4a66" stroke-width="0.9"/>
<rect x="493" y="67" width="14" height="1" fill="#a86a2a" />
<rect x="491.5" y="72.5" width="11" height="7" rx="0.8" fill="#f4f6fa" stroke="#3a4a66" stroke-width="0.9"/>
<rect x="493" y="74" width="7" height="1" fill="#a86a2a" />
<rect x="493" y="76" width="7" height="1" fill="#a86a2a" />
<path d="M506 70 V74 H504 M504 74 L506 72" stroke="#4a5a78" stroke-width="0.9" fill="none"/>
<text x="510.38" y="77" font-size="12" fill="#15428B" textLength="64.31" lengthAdjust="spacingAndGlyphs">Ajustar texto</text>
<rect x="491.5" y="94.5" width="15" height="14" fill="#e8eef8" stroke="#34445e" stroke-width="0.9"/>
<rect x="492" y="98" width="14" height="6" fill="#ffffff" />
<rect x="499" y="95" width="1" height="3" fill="#34445e" />
<rect x="499" y="104" width="1" height="4" fill="#34445e" />
<rect x="492" y="97.5" width="14" height="0.8" fill="#34445e" />
<rect x="492" y="104" width="14" height="0.8" fill="#34445e" />
<text x="499.5" y="103.5" font-size="8" font-family="Liberation Serif" font-weight="bold" text-anchor="middle" fill="#111">a</text>
<path d="M493 101 H496 M505 101 H502" stroke="#111" stroke-width="0.9"/>
<text x="509.82" y="106" font-size="12" fill="#15428B" textLength="97.37" lengthAdjust="spacingAndGlyphs">Combinar y centrar</text>
<path d="M611 99.5 L617 99.5 L614 102.5 Z" fill="#4b6ea6"/>
<rect x="632.5" y="62.5" width="127" height="21" fill="#EEF3FA" stroke="#ABC1DE"/>
<text x="635" y="77" font-size="12.5" >Número</text>
<path d="M749 71.0 L755 71.0 L752 74.0 Z" fill="#4b6ea6"/>
<rect x="632.5" y="91.5" width="79" height="21" rx="2.5" fill="url(#gBtn)" stroke="#A9BFD9"/>
<rect x="665" y="92" width="1" height="20" fill="#B8CBE2" />
<rect x="666" y="92" width="1" height="20" fill="#EAF1FA" />
<rect x="689" y="92" width="1" height="20" fill="#B8CBE2" />
<rect x="690" y="92" width="1" height="20" fill="#EAF1FA" />
<rect x="636" y="94" width="16" height="9" fill="#3a5ab8" stroke="#1e3078" stroke-width="0.6"/>
<ellipse cx="644" cy="98.5" rx="6" ry="3" fill="none" stroke="#e8f0ff" stroke-width="0.9"/>
<ellipse cx="648" cy="101.5" rx="3.2" ry="1.3" fill="#f0c020" stroke="#a07a10" stroke-width="0.5"/>
<ellipse cx="648" cy="103.7" rx="3.2" ry="1.3" fill="#f0c020" stroke="#a07a10" stroke-width="0.5"/>
<ellipse cx="648" cy="105.9" rx="3.2" ry="1.3" fill="#f0c020" stroke="#a07a10" stroke-width="0.5"/>
<ellipse cx="648" cy="108.1" rx="3.2" ry="1.3" fill="#f0c020" stroke="#a07a10" stroke-width="0.5"/>
<ellipse cx="640" cy="107" rx="3" ry="1.3" fill="#f0c020" stroke="#a07a10" stroke-width="0.5"/>
<path d="M656.5 100.5 L662.5 100.5 L659.5 103.5 Z" fill="#4b6ea6"/>
<text x="677" y="107" font-size="14" text-anchor="middle" fill="#111" >%</text>
<text x="700.5" y="107" font-size="12.5" text-anchor="middle" fill="#111" textLength="14" lengthAdjust="spacingAndGlyphs">000</text>
<rect x="715.5" y="91.5" width="44" height="21" rx="2.5" fill="url(#gBtn)" stroke="#A9BFD9"/>
<rect x="737" y="92" width="1" height="20" fill="#B8CBE2" />
<rect x="738" y="92" width="1" height="20" fill="#EAF1FA" />
<text x="733" y="101" font-size="9.5" fill="#111" text-anchor="middle">0</text><text x="729.5" y="108.5" font-size="9.5" fill="#111" text-anchor="middle">00</text>
<path d="M719 98 L723 95.5 V97 H726 V99 H723 V100.5 Z" fill="#3a6ad0"/>
<text x="751.5" y="101" font-size="9.5" fill="#111" text-anchor="middle">00</text><text x="754" y="108.5" font-size="9.5" fill="#111" text-anchor="middle">0</text>
<path d="M749 105.5 L745 103 V104.5 H741 V106.5 H745 V108 Z" fill="#3a6ad0"/>
<rect x="792" y="59" width="6" height="6" fill="#ffffff" stroke="#9ab0c8" stroke-width="0.6"/>
<rect x="799" y="59" width="6" height="6" fill="#ffffff" stroke="#9ab0c8" stroke-width="0.6"/>
<rect x="806" y="59" width="6" height="6" fill="#ffffff" stroke="#9ab0c8" stroke-width="0.6"/>
<rect x="813" y="59" width="6" height="6" fill="#ffffff" stroke="#9ab0c8" stroke-width="0.6"/>
<rect x="792" y="66" width="6" height="6" fill="#ffffff" stroke="#9ab0c8" stroke-width="0.6"/>
<rect x="799" y="66" width="6" height="6" fill="#ffffff" stroke="#9ab0c8" stroke-width="0.6"/>
<rect x="806" y="66" width="6" height="6" fill="#ffffff" stroke="#9ab0c8" stroke-width="0.6"/>
<rect x="813" y="66" width="6" height="6" fill="#ffffff" stroke="#9ab0c8" stroke-width="0.6"/>
<rect x="792" y="73" width="6" height="6" fill="#ffffff" stroke="#9ab0c8" stroke-width="0.6"/>
<rect x="799" y="73" width="6" height="6" fill="#ffffff" stroke="#9ab0c8" stroke-width="0.6"/>
<rect x="806" y="73" width="6" height="6" fill="#ffffff" stroke="#9ab0c8" stroke-width="0.6"/>
<rect x="813" y="73" width="6" height="6" fill="#ffffff" stroke="#9ab0c8" stroke-width="0.6"/>
<rect x="792" y="80" width="6" height="6" fill="#ffffff" stroke="#9ab0c8" stroke-width="0.6"/>
<rect x="799" y="80" width="6" height="6" fill="#ffffff" stroke="#9ab0c8" stroke-width="0.6"/>
<rect x="806" y="80" width="6" height="6" fill="#ffffff" stroke="#9ab0c8" stroke-width="0.6"/>
<rect x="813" y="80" width="6" height="6" fill="#ffffff" stroke="#9ab0c8" stroke-width="0.6"/>
<rect x="799" y="59" width="6" height="20" fill="#e05050" />
<rect x="799" y="66" width="13" height="6" fill="#4a7ad8" />
<rect x="806" y="73" width="13" height="13" fill="#f8f8fa" stroke="#445" stroke-width="0.8"/>
<text x="812.5" y="84" font-size="8" text-anchor="middle" fill="#111">≤≠</text>
<text x="784.34" y="103" font-size="12" fill="#15428B" textLength="43.65" lengthAdjust="spacingAndGlyphs">Formato</text>
<text x="773.49" y="115.5" font-size="12" fill="#15428B" textLength="60.11" lengthAdjust="spacingAndGlyphs">condicional</text>
<path d="M836 109.5 L842 109.5 L839 112.5 Z" fill="#4b6ea6"/>
<rect x="865" y="59" width="6" height="6" fill="#ffffff" stroke="#9ab0c8" stroke-width="0.6"/>
<rect x="872" y="59" width="6" height="6" fill="#ffffff" stroke="#9ab0c8" stroke-width="0.6"/>
<rect x="879" y="59" width="6" height="6" fill="#ffffff" stroke="#9ab0c8" stroke-width="0.6"/>
<rect x="886" y="59" width="6" height="6" fill="#ffffff" stroke="#9ab0c8" stroke-width="0.6"/>
<rect x="865" y="66" width="6" height="6" fill="#ffffff" stroke="#9ab0c8" stroke-width="0.6"/>
<rect x="872" y="66" width="6" height="6" fill="#a8c0f0" stroke="#9ab0c8" stroke-width="0.6"/>
<rect x="879" y="66" width="6" height="6" fill="#a8c0f0" stroke="#9ab0c8" stroke-width="0.6"/>
<rect x="886" y="66" width="6" height="6" fill="#a8c0f0" stroke="#9ab0c8" stroke-width="0.6"/>
<rect x="865" y="73" width="6" height="6" fill="#ffffff" stroke="#9ab0c8" stroke-width="0.6"/>
<rect x="872" y="73" width="6" height="6" fill="#a8c0f0" stroke="#9ab0c8" stroke-width="0.6"/>
<rect x="879" y="73" width="6" height="6" fill="#a8c0f0" stroke="#9ab0c8" stroke-width="0.6"/>
<rect x="886" y="73" width="6" height="6" fill="#a8c0f0" stroke="#9ab0c8" stroke-width="0.6"/>
<rect x="865" y="80" width="6" height="6" fill="#ffffff" stroke="#9ab0c8" stroke-width="0.6"/>
<rect x="872" y="80" width="6" height="6" fill="#a8c0f0" stroke="#9ab0c8" stroke-width="0.6"/>
<rect x="879" y="80" width="6" height="6" fill="#a8c0f0" stroke="#9ab0c8" stroke-width="0.6"/>
<rect x="886" y="80" width="6" height="6" fill="#a8c0f0" stroke="#9ab0c8" stroke-width="0.6"/>
<path d="M880 88 L893 73" stroke="#888" stroke-width="3"/><path d="M878 90 L882 85 L884 88 Z" fill="#3a7ad8"/>
<text x="846.33" y="103" font-size="12" fill="#15428B" textLength="62.47" lengthAdjust="spacingAndGlyphs">Dar formato</text>
<text x="846.11" y="115.5" font-size="12" fill="#15428B" textLength="56.39" lengthAdjust="spacingAndGlyphs">como tabla</text>
<path d="M905 109.5 L911 109.5 L908 112.5 Z" fill="#4b6ea6"/>
<rect x="914.5" y="57.5" width="533" height="59" fill="#D7E5F5" stroke="#B9CEE8"/>
<rect x="917" y="60" width="104" height="26" rx="2" fill="#FFFFFF" stroke="#F0B040" stroke-width="2.2"/>
<text x="923.5" y="78" font-size="13" >Normal</text>
<rect x="1025" y="62" width="100" height="22" fill="#C6EFCE" />
<text x="1029.5" y="78" font-size="13" fill="#006100" >Buena</text>
<rect x="1131" y="62" width="100" height="22" fill="#FFC7CE" />
<text x="1135.5" y="78" font-size="13" fill="#9C0006" >Incorrecto</text>
<rect x="1237" y="62" width="100" height="22" fill="#FFEB9C" />
<text x="1241.5" y="78" font-size="13" fill="#9C6500" >Neutral</text>
<rect x="1343.5" y="62.5" width="99" height="21" fill="#F2F2F2" stroke="#7F7F7F" stroke-width="1.2"/>
<text x="1347.5" y="78" font-size="13" font-weight="bold" fill="#FA7D00" >Cálculo</text>
<rect x="919.5" y="90.5" width="99" height="21" fill="#A5A5A5" stroke="#3F3F3F" stroke-width="1.2"/>
<rect x="921.5" y="92.5" width="95" height="17" fill="none" stroke="#3F3F3F" stroke-width="1"/>
<text x="923.5" y="106" font-size="13" font-weight="bold" fill="#FFFFFF" >Celda de co...</text>
<rect x="1025" y="90" width="100" height="22" fill="#FFFFFF" />
<rect x="1025" y="109" width="100" height="2" fill="#FA7D00" />
<text x="1029.5" y="106" font-size="13" fill="#FA7D00" >Celda vincul...</text>
<rect x="1131.5" y="90.5" width="99" height="21" fill="#FFCC99" stroke="#7F7F7F" stroke-width="1.2"/>
<text x="1135.5" y="106" font-size="13" fill="#3F3F76" >Entrada</text>
<rect x="1237.5" y="90.5" width="99" height="21" fill="#FFFFCC" stroke="#B2B2B2" stroke-width="1.2"/>
<text x="1241.5" y="106" font-size="13" >Notas</text>
<rect x="1343.5" y="90.5" width="99" height="21" fill="#F2F2F2" stroke="#3F3F3F" stroke-width="1.2"/>
<text x="1347.5" y="106" font-size="13" font-weight="bold" fill="#3F3F3F" >Salida</text>
<rect x="1448.5" y="58.5" width="13" height="19" fill="#E5EDF8" stroke="#B9CEE8"/>
<path d="M1452 70 L1458 70 L1455 66 Z" fill="#A0B0C8"/>
<rect x="1448.5" y="78.5" width="13" height="18" fill="#D7E4F4" stroke="#B9CEE8"/>
<path d="M1452 86.5 L1458 86.5 L1455 89.5 Z" fill="#4b6ea6"/>
<rect x="1448.5" y="97.5" width="13" height="18" fill="#D7E4F4" stroke="#B9CEE8"/>
<rect x="1452" y="102" width="6" height="1" fill="#4b6ea6" />
<path d="M1452 105.5 L1458 105.5 L1455 108.5 Z" fill="#4b6ea6"/>
<rect x="1482.5" y="59.5" width="14" height="5" fill="#fff" stroke="#5a6a80" stroke-width="1"/>
<rect x="1489" y="60" width="1" height="4" fill="#5a6a80" />
<rect x="1482.5" y="74.5" width="14" height="10" fill="#fff" stroke="#5a6a80" stroke-width="1"/>
<rect x="1489" y="75" width="1" height="9" fill="#5a6a80" />
<rect x="1483" y="79" width="13" height="1" fill="#5a6a80" />
<rect x="1497.5" y="66.5" width="14" height="5" fill="#6f98e0" stroke="#3a5a9a" stroke-width="1"/>
<rect x="1504" y="67" width="1" height="4" fill="#3a5a9a" />
<path d="M1489 69.5 H1496" stroke="#333a48" stroke-width="1.2"/><path d="M1488 69.5 L1491 67 V72 Z" fill="#333a48"/>
<text x="1476.91" y="103" font-size="12" fill="#15428B" textLength="40.09" lengthAdjust="spacingAndGlyphs">Insertar</text>
<path d="M1494 110.0 L1500 110.0 L1497 113.0 Z" fill="#4b6ea6"/>
<rect x="1530.5" y="59.5" width="14" height="5" fill="#fff" stroke="#5a6a80" stroke-width="1"/>
<rect x="1537" y="60" width="1" height="4" fill="#5a6a80" />
<rect x="1530.5" y="74.5" width="14" height="10" fill="#fff" stroke="#5a6a80" stroke-width="1"/>
<rect x="1537" y="75" width="1" height="9" fill="#5a6a80" />
<rect x="1531" y="79" width="13" height="1" fill="#5a6a80" />
<rect x="1535.5" y="66.5" width="12" height="6" fill="#e4e8ee" stroke="#2a3a8a" stroke-dasharray="1,1"/>
<path d="M1544 64.5 L1553 73.5 M1553 64.5 L1544 73.5" stroke="#e83a1a" stroke-width="1.8"/>
<text x="1521.87" y="103" font-size="12" fill="#15428B" textLength="40.81" lengthAdjust="spacingAndGlyphs">Eliminar</text>
<path d="M1539.4 110.0 L1545.4 110.0 L1542.4 113.0 Z" fill="#4b6ea6"/>
<path d="M1574.5 59.5 H1601" stroke="#333" stroke-dasharray="1,1.2"/>
<path d="M1582 59.5 H1592" stroke="#333" stroke-width="1.2"/>
<rect x="1574.5" y="62.5" width="28" height="21" rx="1" fill="#f4f6fa" stroke="#6a7a90"/>
<rect x="1582" y="63" width="1" height="20" fill="#8a9ab0" />
<rect x="1591" y="63" width="1" height="20" fill="#8a9ab0" />
<rect x="1599" y="63" width="1" height="20" fill="#8a9ab0" />
<rect x="1575" y="67" width="27" height="1" fill="#8a9ab0" />
<rect x="1575" y="79" width="27" height="1" fill="#8a9ab0" />
<rect x="1583" y="68" width="8" height="11" fill="#5f8fe6" />
<path d="M1576 84 V86 Q1576 87 1577 87 H1581 Q1582 87 1582 86 V84 M1583 84 V86 Q1583 87 1584 87 H1589 Q1590 87 1590 86 V84" fill="#f4f6fa" stroke="#6a7a90" stroke-width="0.8"/>
<text x="1567.55" y="103" font-size="12" fill="#15428B" textLength="43.14" lengthAdjust="spacingAndGlyphs">Formato</text>
<path d="M1586.4 110.0 L1592.4 110.0 L1589.4 113.0 Z" fill="#4b6ea6"/>
<text x="1635" y="70" font-size="13" font-weight="bold" text-anchor="middle" fill="#111">Σ</text>
<text x="1647.58" y="68.7" font-size="12" fill="#15428B" textLength="50.82" lengthAdjust="spacingAndGlyphs">Autosuma</text>
<path d="M1703 63.0 L1709 63.0 L1706 66.0 Z" fill="#4b6ea6"/>
<rect x="1629.5" y="79.5" width="12" height="15" fill="#fff" stroke="#4a6aa8"/><rect x="1631" y="81" width="9" height="12" fill="#6a9ae0"/>
<path d="M1633 85 L1638 85 L1638 88 L1640 88 L1635.5 92 L1631 88 L1633 88 Z" fill="#fff"/>
<text x="1646.67" y="90.7" font-size="12" fill="#15428B" textLength="42.32" lengthAdjust="spacingAndGlyphs">Rellenar</text>
<path d="M1692 85.0 L1698 85.0 L1695 88.0 Z" fill="#4b6ea6"/>
<path d="M1629 111 L1637 103 L1643 107 L1635 114 Z" fill="#f4f6f8" stroke="#555" stroke-width="0.9"/>
<rect x="1630" y="114" width="13" height="1" fill="#333" />
<text x="1646.65" y="112.8" font-size="12" fill="#15428B" textLength="32.04" lengthAdjust="spacingAndGlyphs">Borrar</text>
<path d="M1682 107.0 L1688 107.0 L1685 110.0 Z" fill="#4b6ea6"/>
<text x="1727.8" y="70.7" font-size="15" font-weight="bold" fill="#3a5ab8" font-family="Liberation Serif" text-anchor="middle">A</text>
<text x="1728" y="85.8" font-size="15" font-weight="bold" fill="#b04030" font-family="Liberation Serif" text-anchor="middle">Z</text>
<linearGradient id="gFun" x1="0" y1="0" x2="1" y2="0"><stop offset="0" stop-color="#8a9098"/><stop offset="0.45" stop-color="#e8eaee"/><stop offset="1" stop-color="#7a8088"/></linearGradient>
<path d="M1731 63.5 H1751 L1742 73 V83 H1737.5 V73 Z" fill="url(#gFun)" stroke="#6a7078" stroke-width="0.7"/>
<text x="1715.05" y="103" font-size="12" fill="#15428B" textLength="42.95" lengthAdjust="spacingAndGlyphs">Ordenar</text>
<text x="1715.57" y="115.9" font-size="12" fill="#15428B" textLength="35.63" lengthAdjust="spacingAndGlyphs">y filtrar</text>
<path d="M1754 110.0 L1760 110.0 L1757 113.0 Z" fill="#4b6ea6"/>
<linearGradient id="gBin" x1="0" y1="0" x2="1" y2="0"><stop offset="0" stop-color="#5a72a8"/><stop offset="0.4" stop-color="#b8c8e4"/><stop offset="1" stop-color="#3e5488"/></linearGradient>
<rect x="1782.5" y="72.5" width="12" height="11" rx="1.5" fill="url(#gBin)" stroke="#34487a" stroke-width="0.8"/>
<rect x="1784.5" y="66.5" width="8" height="6" rx="1" fill="url(#gBin)" stroke="#34487a" stroke-width="0.8"/>
<rect x="1786" y="61" width="5" height="5.5" rx="1" fill="url(#gBin)" stroke="#34487a" stroke-width="0.8"/>
<rect x="1783" y="78" width="11" height="1" fill="#34487a" opacity="0.6"/>
<rect x="1796.5" y="72.5" width="12" height="11" rx="1.5" fill="url(#gBin)" stroke="#34487a" stroke-width="0.8"/>
<rect x="1798.5" y="66.5" width="8" height="6" rx="1" fill="url(#gBin)" stroke="#34487a" stroke-width="0.8"/>
<rect x="1800" y="61" width="5" height="5.5" rx="1" fill="url(#gBin)" stroke="#34487a" stroke-width="0.8"/>
<rect x="1797" y="78" width="11" height="1" fill="#34487a" opacity="0.6"/>
<text x="1774.59" y="103" font-size="12" fill="#15428B" textLength="42.93" lengthAdjust="spacingAndGlyphs">Buscar y</text>
<text x="1764.39" y="115.9" font-size="12" fill="#15428B" textLength="56.40" lengthAdjust="spacingAndGlyphs">seleccionar</text>
<path d="M1824 110.0 L1830 110.0 L1827 113.0 Z" fill="#4b6ea6"/>
<rect x="0" y="142" width="1920" height="26" fill="#DCE7F5" />
<rect x="0" y="142" width="1920" height="1" fill="#6A8EB4" />
<rect x="0" y="143" width="1900" height="20" fill="#FFFFFF" />
<rect x="0" y="163" width="1920" height="1" fill="#6A8EB4" />
<rect x="0" y="142" width="1" height="26" fill="#6A8EB4" />
<rect x="0" y="164" width="1920" height="1" fill="#FFFFFF" />
<rect x="0" y="165" width="1920" height="2" fill="#DAE6F5" />
<text x="60.81" y="158" font-size="12.5" fill="#000" textLength="19.34" lengthAdjust="spacingAndGlyphs">J24</text>
<path d="M146 151.5 L153 151.5 L149.5 155.5 Z" fill="#111"/>
<path d="M169 143.5 H243 V162.5 H169 Q160 162.5 160 153 Q160 143.5 169 143.5 Z" fill="#CFDDF0" stroke="#A5BBD9"/>
<linearGradient id="gPill" x1="0" y1="0" x2="0" y2="1"><stop offset="0" stop-color="#F3F7FC"/><stop offset="1" stop-color="#BCD0EA"/></linearGradient>
<path d="M169 144 H242.5 V162 H169 Q160.5 162 160.5 153 Q160.5 144 169 144 Z" fill="url(#gPill)"/>
<circle cx="168.5" cy="152" r="3.3" fill="#c8ccd2" stroke="#9aa0a8" stroke-width="0.6"/>
<text x="235" y="158" font-size="13" font-style="italic" font-family="Liberation Serif" fill="#555" text-anchor="middle">fx</text>
<rect x="243" y="143" width="1" height="20" fill="#A5BBD9" />
<text x="250.38" y="158" font-size="12.5" fill="#000" textLength="97.42" lengthAdjust="spacingAndGlyphs">=H24+(E24*B24)</text>
<linearGradient id="gExp" x1="0" y1="0" x2="0" y2="1"><stop offset="0" stop-color="#F0F5FB"/><stop offset="1" stop-color="#A9C1E3"/></linearGradient>
<rect x="1900" y="143" width="20" height="20" fill="#DCE7F5" />
<rect x="1904.5" y="143.5" width="14" height="18" fill="url(#gExp)" stroke="#8DA8CC"/>
<path d="M1908 149 L1911.5 152 L1915 149 M1908 153 L1911.5 156 L1915 153" fill="none" stroke="#111" stroke-width="1.5"/>
<rect x="26" y="188" width="1874" height="934" fill="#FFFFFF" />
<rect x="0" y="167" width="1900" height="1" fill="#6A8EB4" />
<rect x="0" y="168" width="1900" height="19" fill="url(#gColHdr)" />
<rect x="0" y="187" width="1900" height="1" fill="#9EB6CE" />
<rect x="1265" y="168" width="124" height="19" fill="url(#gColSel)" />
<rect x="1265" y="168" width="1" height="20" fill="#F29536" />
<rect x="1265" y="187" width="125" height="1" fill="#F29536" />
<rect x="1389" y="168" width="1" height="20" fill="#F29536" />
<rect x="170" y="168" width="1" height="19" fill="#A9BCD3" />
<rect x="171" y="168" width="1" height="19" fill="#FFFFFF" opacity="0.6"/>
<rect x="315" y="168" width="1" height="19" fill="#A9BCD3" />
<rect x="316" y="168" width="1" height="19" fill="#FFFFFF" opacity="0.6"/>
<rect x="460" y="168" width="1" height="19" fill="#A9BCD3" />
<rect x="461" y="168" width="1" height="19" fill="#FFFFFF" opacity="0.6"/>
<rect x="605" y="168" width="1" height="19" fill="#A9BCD3" />
<rect x="606" y="168" width="1" height="19" fill="#FFFFFF" opacity="0.6"/>
<rect x="750" y="168" width="1" height="19" fill="#A9BCD3" />
<rect x="751" y="168" width="1" height="19" fill="#FFFFFF" opacity="0.6"/>
<rect x="895" y="168" width="1" height="19" fill="#A9BCD3" />
<rect x="896" y="168" width="1" height="19" fill="#FFFFFF" opacity="0.6"/>
<rect x="1040" y="168" width="1" height="19" fill="#A9BCD3" />
<rect x="1041" y="168" width="1" height="19" fill="#FFFFFF" opacity="0.6"/>
<rect x="1185" y="168" width="1" height="19" fill="#A9BCD3" />
<rect x="1186" y="168" width="1" height="19" fill="#FFFFFF" opacity="0.6"/>
<rect x="1469" y="168" width="1" height="19" fill="#A9BCD3" />
<rect x="1470" y="168" width="1" height="19" fill="#FFFFFF" opacity="0.6"/>
<rect x="1549" y="168" width="1" height="19" fill="#A9BCD3" />
<rect x="1550" y="168" width="1" height="19" fill="#FFFFFF" opacity="0.6"/>
<rect x="1629" y="168" width="1" height="19" fill="#A9BCD3" />
<rect x="1630" y="168" width="1" height="19" fill="#FFFFFF" opacity="0.6"/>
<rect x="1709" y="168" width="1" height="19" fill="#A9BCD3" />
<rect x="1710" y="168" width="1" height="19" fill="#FFFFFF" opacity="0.6"/>
<rect x="1789" y="168" width="1" height="19" fill="#A9BCD3" />
<rect x="1790" y="168" width="1" height="19" fill="#FFFFFF" opacity="0.6"/>
<rect x="1869" y="168" width="1" height="19" fill="#A9BCD3" />
<rect x="1870" y="168" width="1" height="19" fill="#FFFFFF" opacity="0.6"/>
<rect x="25" y="168" width="1" height="19" fill="#9EB6CE" />
<text x="98.0" y="183" font-size="12" text-anchor="middle" fill="#27413E" >A</text>
<text x="243.0" y="183" font-size="12" text-anchor="middle" fill="#27413E" >B</text>
<text x="388.0" y="183" font-size="12" text-anchor="middle" fill="#27413E" >C</text>
<text x="533.0" y="183" font-size="12" text-anchor="middle" fill="#27413E" >D</text>
<text x="678.0" y="183" font-size="12" text-anchor="middle" fill="#27413E" >E</text>
<text x="823.0" y="183" font-size="12" text-anchor="middle" fill="#27413E" >F</text>
<text x="968.0" y="183" font-size="12" text-anchor="middle" fill="#27413E" >G</text>
<text x="1113.0" y="183" font-size="12" text-anchor="middle" fill="#27413E" >H</text>
<text x="1225.5" y="183" font-size="12" text-anchor="middle" fill="#27413E" >I</text>
<text x="1327.5" y="183" font-size="12" text-anchor="middle" fill="#27413E" >J</text>
<text x="1429.5" y="183" font-size="12" text-anchor="middle" fill="#27413E" >K</text>
<text x="1509.5" y="183" font-size="12" text-anchor="middle" fill="#27413E" >L</text>
<text x="1589.5" y="183" font-size="12" text-anchor="middle" fill="#27413E" >M</text>
<text x="1669.5" y="183" font-size="12" text-anchor="middle" fill="#27413E" >N</text>
<text x="1749.5" y="183" font-size="12" text-anchor="middle" fill="#27413E" >O</text>
<text x="1829.5" y="183" font-size="12" text-anchor="middle" fill="#27413E" >P</text>
<rect x="0" y="168" width="25" height="19" fill="#E4ECF7" />
<rect x="1" y="169" width="24" height="18" fill="#D6E4F6" />
<rect x="2" y="170" width="22" height="16" fill="#A9C5EA" />
<path d="M10.5 184 L21 184 L21 173 Z" fill="#EEEEF0"/>
<rect x="0" y="187" width="25" height="1" fill="#F29536" />
<rect x="0" y="188" width="25" height="934" fill="#E4ECF7" />
<rect x="25" y="188" width="1" height="934" fill="#9EB6CE" />
<rect x="0" y="227" width="25" height="1" fill="#A7BBD3" />
<rect x="0" y="267" width="25" height="1" fill="#A7BBD3" />
<rect x="0" y="307" width="25" height="1" fill="#A7BBD3" />
<rect x="0" y="347" width="25" height="1" fill="#A7BBD3" />
<rect x="0" y="387" width="25" height="1" fill="#A7BBD3" />
<rect x="0" y="427" width="25" height="1" fill="#A7BBD3" />
<rect x="0" y="467" width="25" height="1" fill="#A7BBD3" />
<rect x="0" y="507" width="25" height="1" fill="#A7BBD3" />
<rect x="0" y="547" width="25" height="1" fill="#A7BBD3" />
<rect x="0" y="587" width="25" height="1" fill="#A7BBD3" />
<rect x="0" y="627" width="25" height="1" fill="#A7BBD3" />
<rect x="0" y="667" width="25" height="1" fill="#A7BBD3" />
<rect x="0" y="707" width="25" height="1" fill="#A7BBD3" />
<rect x="0" y="747" width="25" height="1" fill="#A7BBD3" />
<rect x="0" y="787" width="25" height="1" fill="#A7BBD3" />
<rect x="0" y="827" width="25" height="1" fill="#A7BBD3" />
<rect x="0" y="867" width="25" height="1" fill="#A7BBD3" />
<rect x="0" y="907" width="25" height="1" fill="#A7BBD3" />
<rect x="0" y="947" width="25" height="1" fill="#A7BBD3" />
<rect x="0" y="987" width="25" height="1" fill="#A7BBD3" />
<rect x="0" y="1027" width="25" height="1" fill="#A7BBD3" />
<rect x="0" y="1067" width="25" height="1" fill="#A7BBD3" />
<rect x="0" y="1107" width="25" height="1" fill="#A7BBD3" />
<rect x="0" y="1068" width="25" height="39" fill="#FCD593" />
<rect x="0" y="1067" width="26" height="1" fill="#F29536" />
<rect x="0" y="1107" width="26" height="1" fill="#F29536" />
<rect x="25" y="1067" width="1" height="41" fill="#F29536" />
<text x="13" y="220" font-size="12" text-anchor="middle" fill="#27413E" >2</text>
<text x="13" y="260" font-size="12" text-anchor="middle" fill="#27413E" >3</text>
<text x="13" y="300" font-size="12" text-anchor="middle" fill="#27413E" >4</text>
<text x="13" y="340" font-size="12" text-anchor="middle" fill="#27413E" >5</text>
<text x="13" y="380" font-size="12" text-anchor="middle" fill="#27413E" >6</text>
<text x="13" y="420" font-size="12" text-anchor="middle" fill="#27413E" >7</text>
<text x="13" y="460" font-size="12" text-anchor="middle" fill="#27413E" >8</text>
<text x="13" y="500" font-size="12" text-anchor="middle" fill="#27413E" >9</text>
<text x="13" y="540" font-size="12" text-anchor="middle" fill="#27413E" >10</text>
<text x="13" y="580" font-size="12" text-anchor="middle" fill="#27413E" >11</text>
<text x="13" y="620" font-size="12" text-anchor="middle" fill="#27413E" >12</text>
<text x="13" y="660" font-size="12" text-anchor="middle" fill="#27413E" >13</text>
<text x="13" y="700" font-size="12" text-anchor="middle" fill="#27413E" >14</text>
<text x="13" y="740" font-size="12" text-anchor="middle" fill="#27413E" >15</text>
<text x="13" y="780" font-size="12" text-anchor="middle" fill="#27413E" >16</text>
<text x="13" y="820" font-size="12" text-anchor="middle" fill="#27413E" >17</text>
<text x="13" y="860" font-size="12" text-anchor="middle" fill="#27413E" >18</text>
<text x="13" y="900" font-size="12" text-anchor="middle" fill="#27413E" >19</text>
<text x="13" y="940" font-size="12" text-anchor="middle" fill="#27413E" >20</text>
<text x="13" y="980" font-size="12" text-anchor="middle" fill="#27413E" >21</text>
<text x="13" y="1020" font-size="12" text-anchor="middle" fill="#27413E" >22</text>
<text x="13" y="1060" font-size="12" text-anchor="middle" fill="#27413E" >23</text>
<text x="13" y="1100" font-size="12" text-anchor="middle" fill="#27413E" >24</text>
<rect x="170" y="188" width="1" height="934" fill="#D0D7E5" />
<rect x="315" y="188" width="1" height="934" fill="#D0D7E5" />
<rect x="460" y="188" width="1" height="934" fill="#D0D7E5" />
<rect x="605" y="188" width="1" height="934" fill="#D0D7E5" />
<rect x="750" y="188" width="1" height="934" fill="#D0D7E5" />
<rect x="895" y="188" width="1" height="934" fill="#D0D7E5" />
<rect x="1040" y="188" width="1" height="934" fill="#D0D7E5" />
<rect x="1185" y="188" width="1" height="934" fill="#D0D7E5" />
<rect x="1265" y="188" width="1" height="934" fill="#D0D7E5" />
<rect x="1389" y="188" width="1" height="934" fill="#D0D7E5" />
<rect x="1469" y="188" width="1" height="934" fill="#D0D7E5" />
<rect x="1549" y="188" width="1" height="519" fill="#D0D7E5" />
<rect x="1549" y="748" width="1" height="79" fill="#D0D7E5" />
<rect x="1549" y="868" width="1" height="119" fill="#D0D7E5" />
<rect x="1549" y="1108" width="1" height="14" fill="#D0D7E5" />
<rect x="1629" y="188" width="1" height="519" fill="#D0D7E5" />
<rect x="1629" y="748" width="1" height="79" fill="#D0D7E5" />
<rect x="1629" y="868" width="1" height="119" fill="#D0D7E5" />
<rect x="1629" y="1108" width="1" height="14" fill="#D0D7E5" />
<rect x="1709" y="188" width="1" height="519" fill="#D0D7E5" />
<rect x="1709" y="748" width="1" height="79" fill="#D0D7E5" />
<rect x="1709" y="868" width="1" height="119" fill="#D0D7E5" />
<rect x="1709" y="1108" width="1" height="14" fill="#D0D7E5" />
<rect x="1789" y="188" width="1" height="639" fill="#D0D7E5" />
<rect x="1789" y="868" width="1" height="199" fill="#D0D7E5" />
<rect x="1789" y="1108" width="1" height="14" fill="#D0D7E5" />
<rect x="1869" y="188" width="1" height="879" fill="#D0D7E5" />
<rect x="1869" y="1108" width="1" height="14" fill="#D0D7E5" />
<rect x="26" y="227" width="1874" height="1" fill="#D0D7E5" />
<rect x="26" y="267" width="1874" height="1" fill="#D0D7E5" />
<rect x="26" y="307" width="1874" height="1" fill="#D0D7E5" />
<rect x="26" y="347" width="1874" height="1" fill="#D0D7E5" />
<rect x="26" y="387" width="1874" height="1" fill="#D0D7E5" />
<rect x="26" y="427" width="1874" height="1" fill="#D0D7E5" />
<rect x="26" y="467" width="1874" height="1" fill="#D0D7E5" />
<rect x="26" y="507" width="1874" height="1" fill="#D0D7E5" />
<rect x="26" y="547" width="1874" height="1" fill="#D0D7E5" />
<rect x="26" y="587" width="1874" height="1" fill="#D0D7E5" />
<rect x="26" y="627" width="1874" height="1" fill="#D0D7E5" />
<rect x="26" y="667" width="1874" height="1" fill="#D0D7E5" />
<rect x="26" y="707" width="1874" height="1" fill="#D0D7E5" />
<rect x="26" y="747" width="1874" height="1" fill="#D0D7E5" />
<rect x="26" y="787" width="1874" height="1" fill="#D0D7E5" />
<rect x="26" y="827" width="1874" height="1" fill="#D0D7E5" />
<rect x="26" y="867" width="1874" height="1" fill="#D0D7E5" />
<rect x="26" y="907" width="1874" height="1" fill="#D0D7E5" />
<rect x="26" y="947" width="1874" height="1" fill="#D0D7E5" />
<rect x="26" y="987" width="1874" height="1" fill="#D0D7E5" />
<rect x="26" y="1027" width="1874" height="1" fill="#D0D7E5" />
<rect x="26" y="1067" width="1874" height="1" fill="#D0D7E5" />
<rect x="26" y="1107" width="1874" height="1" fill="#D0D7E5" />
<rect x="26" y="426" width="1160" height="2" fill="#000" />
<rect x="26" y="466" width="1160" height="2" fill="#000" />
<rect x="1184" y="426" width="2" height="42" fill="#000" />
<rect x="1264" y="426" width="127" height="2" fill="#000" />
<rect x="1264" y="466" width="127" height="2" fill="#000" />
<rect x="1264" y="426" width="2" height="42" fill="#000" />
<rect x="1388" y="426" width="2" height="42" fill="#000" />
<text x="305.20" y="220" font-size="24" text-anchor="end" textLength="61.48" lengthAdjust="spacingAndGlyphs">6,351</text>
<text x="455.53" y="220" font-size="24" text-anchor="end" textLength="61.55" lengthAdjust="spacingAndGlyphs">1.575</text>
<text x="740.20" y="220" font-size="24" text-anchor="end" textLength="61.48" lengthAdjust="spacingAndGlyphs">6,351</text>
<text x="890.53" y="220" font-size="24" text-anchor="end" textLength="61.55" lengthAdjust="spacingAndGlyphs">1.575</text>
<text x="305.08" y="260" font-size="24" text-anchor="end" textLength="61.48" lengthAdjust="spacingAndGlyphs">6,986</text>
<text x="455.70" y="260" font-size="24" text-anchor="end" textLength="61.55" lengthAdjust="spacingAndGlyphs">1.431</text>
<text x="739.72" y="260" font-size="24" text-anchor="end" textLength="61.48" lengthAdjust="spacingAndGlyphs">5,774</text>
<text x="890.74" y="260" font-size="24" text-anchor="end" textLength="61.55" lengthAdjust="spacingAndGlyphs">1.732</text>
<text x="305.03" y="300" font-size="24" text-anchor="end" textLength="61.48" lengthAdjust="spacingAndGlyphs">7,685</text>
<text x="455.70" y="300" font-size="24" text-anchor="end" textLength="61.55" lengthAdjust="spacingAndGlyphs">1.301</text>
<text x="740.16" y="300" font-size="24" text-anchor="end" textLength="61.48" lengthAdjust="spacingAndGlyphs">5,249</text>
<text x="890.53" y="300" font-size="24" text-anchor="end" textLength="61.55" lengthAdjust="spacingAndGlyphs">1.905</text>
<text x="305.08" y="340" font-size="24" text-anchor="end" textLength="61.48" lengthAdjust="spacingAndGlyphs">8,453</text>
<text x="455.58" y="340" font-size="24" text-anchor="end" textLength="61.55" lengthAdjust="spacingAndGlyphs">1.183</text>
<text x="740.24" y="340" font-size="24" text-anchor="end" textLength="61.48" lengthAdjust="spacingAndGlyphs">4,772</text>
<text x="890.58" y="340" font-size="24" text-anchor="end" textLength="61.55" lengthAdjust="spacingAndGlyphs">2.096</text>
<text x="305.07" y="380" font-size="24" text-anchor="end" textLength="61.48" lengthAdjust="spacingAndGlyphs">9,298</text>
<text x="455.53" y="380" font-size="24" text-anchor="end" textLength="61.55" lengthAdjust="spacingAndGlyphs">1.075</text>
<text x="740.07" y="380" font-size="24" text-anchor="end" textLength="61.48" lengthAdjust="spacingAndGlyphs">4,338</text>
<text x="890.53" y="380" font-size="24" text-anchor="end" textLength="61.55" lengthAdjust="spacingAndGlyphs">2.305</text>
<text x="305.07" y="420" font-size="24" text-anchor="end" textLength="75.16" lengthAdjust="spacingAndGlyphs">10,228</text>
<text x="455.57" y="420" font-size="24" text-anchor="end" textLength="41.05" lengthAdjust="spacingAndGlyphs">978</text>
<text x="740.08" y="420" font-size="24" text-anchor="end" textLength="61.48" lengthAdjust="spacingAndGlyphs">3,943</text>
<text x="890.58" y="420" font-size="24" text-anchor="end" textLength="61.55" lengthAdjust="spacingAndGlyphs">2.536</text>
<text x="594.08" y="220" font-size="24" text-anchor="end" textLength="61.55" lengthAdjust="spacingAndGlyphs">7.873</text>
<text x="28.69" y="460" font-size="18" font-weight="bold" >fecha</text>
<text x="173.47" y="460" font-size="18" font-weight="bold" >accio.valor</text>
<text x="318.47" y="460" font-size="18" font-weight="bold" >accio.compra</text>
<text x="463.47" y="460" font-size="18" font-weight="bold" >accio.venta</text>
<text x="608.37" y="460" font-size="18" font-weight="bold" >saldo accio.</text>
<text x="753.3" y="460" font-size="18" font-weight="bold" >euros compra</text>
<text x="898.3" y="460" font-size="18" font-weight="bold" >euros venta</text>
<text x="1043.37" y="460" font-size="18" font-weight="bold" >saldo euros</text>
<text x="1268.37" y="460" font-size="18" font-weight="bold" >saldo total</text>
<text x="32.97" y="500" font-size="24" textLength="133.26" lengthAdjust="spacingAndGlyphs">15/08/2011</text>
<text x="745.96" y="500" font-size="24" text-anchor="end" textLength="13.68" lengthAdjust="spacingAndGlyphs">0</text>
<text x="1180.96" y="500" font-size="24" text-anchor="end" textLength="88.92" lengthAdjust="spacingAndGlyphs">100.000</text>
<text x="1378.96" y="500" font-size="24" text-anchor="end" textLength="88.92" lengthAdjust="spacingAndGlyphs">100.000</text>
<text x="32.97" y="540" font-size="24" textLength="133.26" lengthAdjust="spacingAndGlyphs">16/08/2011</text>
<text x="304.70" y="540" font-size="24" text-anchor="end" textLength="61.48" lengthAdjust="spacingAndGlyphs">6,351</text>
<text x="455.58" y="540" font-size="24" text-anchor="end" textLength="61.55" lengthAdjust="spacingAndGlyphs">7.873</text>
<text x="746.08" y="540" font-size="24" text-anchor="end" textLength="61.55" lengthAdjust="spacingAndGlyphs">7.873</text>
<text x="890.46" y="540" font-size="24" text-anchor="end" textLength="75.24" lengthAdjust="spacingAndGlyphs">50.000</text>
<text x="1180.96" y="540" font-size="24" text-anchor="end" textLength="75.24" lengthAdjust="spacingAndGlyphs">50.000</text>
<text x="1379.20" y="540" font-size="24" text-anchor="end" textLength="88.92" lengthAdjust="spacingAndGlyphs">100.001</text>
<text x="1467.06" y="540" font-size="12.7" text-anchor="end" >6,35090963</text>
<text x="33.97" y="580" font-size="24" textLength="132.29" lengthAdjust="spacingAndGlyphs">05/09/2011</text>
<text x="304.22" y="580" font-size="24" text-anchor="end" textLength="61.48" lengthAdjust="spacingAndGlyphs">5,774</text>
<text x="455.74" y="580" font-size="24" text-anchor="end" textLength="61.55" lengthAdjust="spacingAndGlyphs">1.732</text>
<text x="746.03" y="580" font-size="24" text-anchor="end" textLength="61.55" lengthAdjust="spacingAndGlyphs">9.605</text>
<text x="890.46" y="580" font-size="24" text-anchor="end" textLength="75.24" lengthAdjust="spacingAndGlyphs">10.000</text>
<text x="1180.96" y="580" font-size="24" text-anchor="end" textLength="75.24" lengthAdjust="spacingAndGlyphs">40.000</text>
<text x="1379.17" y="580" font-size="24" text-anchor="end" textLength="75.24" lengthAdjust="spacingAndGlyphs">95.459</text>
<text x="1467.14" y="580" font-size="12.7" text-anchor="end" >6,0624457</text>
<text x="32.97" y="620" font-size="24" textLength="133.26" lengthAdjust="spacingAndGlyphs">12/09/2011</text>
<text x="304.66" y="620" font-size="24" text-anchor="end" textLength="61.48" lengthAdjust="spacingAndGlyphs">5,249</text>
<text x="455.53" y="620" font-size="24" text-anchor="end" textLength="61.55" lengthAdjust="spacingAndGlyphs">1.905</text>
<text x="745.96" y="620" font-size="24" text-anchor="end" textLength="75.24" lengthAdjust="spacingAndGlyphs">11.510</text>
<text x="890.46" y="620" font-size="24" text-anchor="end" textLength="75.24" lengthAdjust="spacingAndGlyphs">10.000</text>
<text x="1180.96" y="620" font-size="24" text-anchor="end" textLength="75.24" lengthAdjust="spacingAndGlyphs">30.000</text>
<text x="1379.08" y="620" font-size="24" text-anchor="end" textLength="75.24" lengthAdjust="spacingAndGlyphs">90.416</text>
<text x="1467.12" y="620" font-size="12.7" text-anchor="end" >5,7421561</text>
<text x="32.97" y="660" font-size="24" textLength="133.26" lengthAdjust="spacingAndGlyphs">15/09/2011</text>
<text x="304.22" y="660" font-size="24" text-anchor="end" textLength="61.48" lengthAdjust="spacingAndGlyphs">5,774</text>
<text x="594.74" y="660" font-size="24" text-anchor="end" textLength="61.55" lengthAdjust="spacingAndGlyphs">1.732</text>
<text x="746.07" y="660" font-size="24" text-anchor="end" textLength="61.55" lengthAdjust="spacingAndGlyphs">9.778</text>
<text x="1036.46" y="660" font-size="24" text-anchor="end" textLength="75.24" lengthAdjust="spacingAndGlyphs">10.000</text>
<text x="1180.96" y="660" font-size="24" text-anchor="end" textLength="75.24" lengthAdjust="spacingAndGlyphs">40.000</text>
<text x="1379.07" y="660" font-size="24" text-anchor="end" textLength="75.24" lengthAdjust="spacingAndGlyphs">96.458</text>
<text x="1467.06" y="660" font-size="12.7" text-anchor="end" >6,12588416</text>
<text x="33.97" y="700" font-size="24" textLength="132.29" lengthAdjust="spacingAndGlyphs">07/10/2011</text>
<text x="304.70" y="700" font-size="24" text-anchor="end" textLength="61.48" lengthAdjust="spacingAndGlyphs">6,351</text>
<text x="594.53" y="700" font-size="24" text-anchor="end" textLength="61.55" lengthAdjust="spacingAndGlyphs">1.575</text>
<text x="746.08" y="700" font-size="24" text-anchor="end" textLength="61.55" lengthAdjust="spacingAndGlyphs">8.203</text>
<text x="1036.46" y="700" font-size="24" text-anchor="end" textLength="75.24" lengthAdjust="spacingAndGlyphs">10.000</text>
<text x="1180.96" y="700" font-size="24" text-anchor="end" textLength="75.24" lengthAdjust="spacingAndGlyphs">50.000</text>
<text x="1379.24" y="700" font-size="24" text-anchor="end" textLength="88.92" lengthAdjust="spacingAndGlyphs">102.097</text>
<text x="1467.14" y="700" font-size="12.7" text-anchor="end" >6,484012</text>
<text x="32.97" y="740" font-size="24" textLength="133.26" lengthAdjust="spacingAndGlyphs">14/10/2011</text>
<text x="304.46" y="740" font-size="24" text-anchor="end" textLength="61.48" lengthAdjust="spacingAndGlyphs">6,200</text>
<text x="455.22" y="740" font-size="24" text-anchor="end" textLength="61.55" lengthAdjust="spacingAndGlyphs">8.064</text>
<text x="746.24" y="740" font-size="24" text-anchor="end" textLength="75.24" lengthAdjust="spacingAndGlyphs">16.267</text>
<text x="890.46" y="740" font-size="24" text-anchor="end" textLength="75.24" lengthAdjust="spacingAndGlyphs">50.000</text>
<text x="1180.96" y="740" font-size="24" text-anchor="end" textLength="13.68" lengthAdjust="spacingAndGlyphs">0</text>
<text x="1379.03" y="740" font-size="24" text-anchor="end" textLength="88.92" lengthAdjust="spacingAndGlyphs">100.855</text>
<text x="1467.06" y="740" font-size="12.7" text-anchor="end" >6,40514416</text>
<text x="33.67" y="780" font-size="24" textLength="132.58" lengthAdjust="spacingAndGlyphs">20/10/2011</text>
<text x="304.22" y="780" font-size="24" text-anchor="end" textLength="61.48" lengthAdjust="spacingAndGlyphs">5,774</text>
<text x="594.57" y="780" font-size="24" text-anchor="end" textLength="61.55" lengthAdjust="spacingAndGlyphs">6.928</text>
<text x="746.17" y="780" font-size="24" text-anchor="end" textLength="61.55" lengthAdjust="spacingAndGlyphs">9.339</text>
<text x="1036.46" y="780" font-size="24" text-anchor="end" textLength="75.24" lengthAdjust="spacingAndGlyphs">40.000</text>
<text x="1180.96" y="780" font-size="24" text-anchor="end" textLength="75.24" lengthAdjust="spacingAndGlyphs">40.000</text>
<text x="1379.08" y="780" font-size="24" text-anchor="end" textLength="75.24" lengthAdjust="spacingAndGlyphs">93.923</text>
<text x="1467.05" y="780" font-size="12.7" text-anchor="end" >5,96490448</text>
<text x="33.67" y="820" font-size="24" textLength="132.58" lengthAdjust="spacingAndGlyphs">27/10/2011</text>
<text x="304.70" y="820" font-size="24" text-anchor="end" textLength="61.48" lengthAdjust="spacingAndGlyphs">6,351</text>
<text x="594.53" y="820" font-size="24" text-anchor="end" textLength="61.55" lengthAdjust="spacingAndGlyphs">1.575</text>
<text x="745.72" y="820" font-size="24" text-anchor="end" textLength="61.55" lengthAdjust="spacingAndGlyphs">7.764</text>
<text x="1036.46" y="820" font-size="24" text-anchor="end" textLength="75.24" lengthAdjust="spacingAndGlyphs">10.000</text>
<text x="1180.96" y="820" font-size="24" text-anchor="end" textLength="75.24" lengthAdjust="spacingAndGlyphs">50.000</text>
<text x="1379.17" y="820" font-size="24" text-anchor="end" textLength="75.24" lengthAdjust="spacingAndGlyphs">99.309</text>
<text x="1467.12" y="820" font-size="12.7" text-anchor="end" >6,30694551</text>
<text x="33.67" y="860" font-size="24" textLength="132.58" lengthAdjust="spacingAndGlyphs">28/10/2011</text>
<text x="304.46" y="860" font-size="24" text-anchor="end" textLength="61.48" lengthAdjust="spacingAndGlyphs">6,450</text>
<text x="455.74" y="860" font-size="24" text-anchor="end" textLength="41.05" lengthAdjust="spacingAndGlyphs">332</text>
<text x="746.08" y="860" font-size="24" text-anchor="end" textLength="61.55" lengthAdjust="spacingAndGlyphs">8.096</text>
<text x="1180.96" y="860" font-size="24" text-anchor="end" textLength="75.24" lengthAdjust="spacingAndGlyphs">50.000</text>
<text x="1379.17" y="860" font-size="24" text-anchor="end" textLength="88.92" lengthAdjust="spacingAndGlyphs">102.219</text>
<text x="1466.87" y="860" font-size="12.7" text-anchor="end" >6,49175664</text>
<text x="33.97" y="900" font-size="24" textLength="132.29" lengthAdjust="spacingAndGlyphs">02/11/2011</text>
<text x="310.72" y="900" font-size="24" text-anchor="end" textLength="61.48" lengthAdjust="spacingAndGlyphs">5,774</text>
<text x="455.74" y="900" font-size="24" text-anchor="end" textLength="61.55" lengthAdjust="spacingAndGlyphs">1.732</text>
<text x="746.07" y="900" font-size="24" text-anchor="end" textLength="61.55" lengthAdjust="spacingAndGlyphs">9.828</text>
<text x="890.46" y="900" font-size="24" text-anchor="end" textLength="75.24" lengthAdjust="spacingAndGlyphs">10.000</text>
<text x="1180.96" y="900" font-size="24" text-anchor="end" textLength="75.24" lengthAdjust="spacingAndGlyphs">40.000</text>
<text x="1385.24" y="900" font-size="24" text-anchor="end" textLength="75.24" lengthAdjust="spacingAndGlyphs">96.747</text>
<text x="1467.05" y="900" font-size="12.7" text-anchor="end" >6,14421898</text>
<text x="33.67" y="940" font-size="24" textLength="132.58" lengthAdjust="spacingAndGlyphs">22/11/2011</text>
<text x="304.66" y="940" font-size="24" text-anchor="end" textLength="61.48" lengthAdjust="spacingAndGlyphs">5,249</text>
<text x="455.53" y="940" font-size="24" text-anchor="end" textLength="61.55" lengthAdjust="spacingAndGlyphs">1.905</text>
<text x="746.08" y="940" font-size="24" text-anchor="end" textLength="75.24" lengthAdjust="spacingAndGlyphs">11.733</text>
<text x="890.46" y="940" font-size="24" text-anchor="end" textLength="75.24" lengthAdjust="spacingAndGlyphs">10.000</text>
<text x="1180.96" y="940" font-size="24" text-anchor="end" textLength="75.24" lengthAdjust="spacingAndGlyphs">30.000</text>
<text x="1385.24" y="940" font-size="24" text-anchor="end" textLength="75.24" lengthAdjust="spacingAndGlyphs">91.587</text>
<text x="1467.06" y="940" font-size="12.7" text-anchor="end" >5,81649416</text>
<text x="33.97" y="980" font-size="24" textLength="132.29" lengthAdjust="spacingAndGlyphs">02/12/2011</text>
<text x="304.22" y="980" font-size="24" text-anchor="end" textLength="61.48" lengthAdjust="spacingAndGlyphs">5,774</text>
<text x="594.74" y="980" font-size="24" text-anchor="end" textLength="61.55" lengthAdjust="spacingAndGlyphs">1.732</text>
<text x="746.20" y="980" font-size="24" text-anchor="end" textLength="75.24" lengthAdjust="spacingAndGlyphs">10.001</text>
<text x="1036.46" y="980" font-size="24" text-anchor="end" textLength="75.24" lengthAdjust="spacingAndGlyphs">10.000</text>
<text x="1180.96" y="980" font-size="24" text-anchor="end" textLength="75.24" lengthAdjust="spacingAndGlyphs">40.000</text>
<text x="1385.08" y="980" font-size="24" text-anchor="end" textLength="75.24" lengthAdjust="spacingAndGlyphs">97.746</text>
<text x="1466.87" y="980" font-size="12.7" text-anchor="end" >6,20765744</text>
<text x="32.97" y="1020" font-size="24" textLength="133.29" lengthAdjust="spacingAndGlyphs">13/01/2012</text>
<text x="304.46" y="1020" font-size="24" text-anchor="end" textLength="61.48" lengthAdjust="spacingAndGlyphs">5,750</text>
<text x="746.20" y="1020" font-size="24" text-anchor="end" textLength="75.24" lengthAdjust="spacingAndGlyphs">10.001</text>
<text x="1180.96" y="1020" font-size="24" text-anchor="end" textLength="75.24" lengthAdjust="spacingAndGlyphs">40.000</text>
<text x="1385.08" y="1020" font-size="24" text-anchor="end" textLength="75.24" lengthAdjust="spacingAndGlyphs">97.506</text>
<text x="1467.03" y="1020" font-size="12.7" text-anchor="end" >6,19241395</text>
<text x="32.97" y="1060" font-size="24" textLength="133.29" lengthAdjust="spacingAndGlyphs">18/01/2012</text>
<text x="304.46" y="1060" font-size="24" text-anchor="end" textLength="61.48" lengthAdjust="spacingAndGlyphs">5,750</text>
<text x="746.20" y="1060" font-size="24" text-anchor="end" textLength="75.24" lengthAdjust="spacingAndGlyphs">10.001</text>
<text x="1036.46" y="1060" font-size="24" text-anchor="end" textLength="61.55" lengthAdjust="spacingAndGlyphs">1.140</text>
<text x="1180.96" y="1060" font-size="24" text-anchor="end" textLength="75.24" lengthAdjust="spacingAndGlyphs">41.140</text>
<text x="1385.08" y="1060" font-size="24" text-anchor="end" textLength="75.24" lengthAdjust="spacingAndGlyphs">98.646</text>
<text x="1467.1" y="1060" font-size="12.7" text-anchor="end" >6,26481329</text>
<text x="33.67" y="1100" font-size="24" textLength="132.62" lengthAdjust="spacingAndGlyphs">26/01/2012</text>
<text x="304.46" y="1100" font-size="24" text-anchor="end" textLength="61.48" lengthAdjust="spacingAndGlyphs">6,060</text>
<text x="594.46" y="1100" font-size="24" text-anchor="end" textLength="61.55" lengthAdjust="spacingAndGlyphs">1.000</text>
<text x="746.20" y="1100" font-size="24" text-anchor="end" textLength="61.55" lengthAdjust="spacingAndGlyphs">9.001</text>
<text x="1036.46" y="1100" font-size="24" text-anchor="end" textLength="61.55" lengthAdjust="spacingAndGlyphs">6.060</text>
<text x="1180.96" y="1100" font-size="24" text-anchor="end" textLength="75.24" lengthAdjust="spacingAndGlyphs">47.200</text>
<text x="1385.08" y="1100" font-size="24" text-anchor="end" textLength="88.92" lengthAdjust="spacingAndGlyphs">101.746</text>
<text x="1467.14" y="1100" font-size="12.7" text-anchor="end" >6,46170837</text>
<clipPath id="clipGrid"><rect x="26" y="188" width="1874" height="934"/></clipPath>
<text x="1471.61" y="860" font-size="12.5" textLength="371.66" lengthAdjust="spacingAndGlyphs">Conversion en acciones de nuestros derechos 16.267/49=332</text>
<text x="1471.99" y="740" font-size="12.5" textLength="249.80" lengthAdjust="spacingAndGlyphs">Tenemos 16.267 derechos de dividendos</text>
<text x="1471.99" y="1020" font-size="12.5" textLength="249.80" lengthAdjust="spacingAndGlyphs">Tenemos 10.001 derechos de dividendos</text>
<text x="1472.24" y="1060" font-size="12.5" textLength="313.85" lengthAdjust="spacingAndGlyphs">Venta de opciones 30call y 35put según explicacion</text>
<text clip-path="url(#clipGrid)" x="1471.19" y="1100" font-size="12.5" textLength="459.77" lengthAdjust="spacingAndGlyphs">Ejecucion de nuestras 10 opciones call a 6,06 euros (cotiz ha llegado a 6,06)</text>
<rect x="1264" y="1066" width="127" height="3" fill="#17140c" />
<rect x="1264" y="1066" width="3" height="43" fill="#17140c" />
<rect x="1388" y="1066" width="3" height="38" fill="#17140c" />
<rect x="1264" y="1106" width="122" height="3" fill="#17140c" />
<rect x="1387" y="1105" width="5" height="5" fill="#17140c" />
<rect x="1367" y="217" width="511" height="289" fill="#FFFFFF" stroke="#868686" stroke-width="1" shape-rendering="crispEdges" transform="translate(0.5,0.5)"/>
<line x1="1417" y1="231.5" x2="1760" y2="231.5" stroke="#868686" stroke-width="1"/>
<line x1="1417" y1="246.5" x2="1760" y2="246.5" stroke="#868686" stroke-width="1"/>
<line x1="1417" y1="261.5" x2="1760" y2="261.5" stroke="#868686" stroke-width="1"/>
<line x1="1417" y1="276.5" x2="1760" y2="276.5" stroke="#868686" stroke-width="1"/>
<line x1="1417" y1="291.5" x2="1760" y2="291.5" stroke="#868686" stroke-width="1"/>
<line x1="1417" y1="306.5" x2="1760" y2="306.5" stroke="#868686" stroke-width="1"/>
<line x1="1417" y1="321.5" x2="1760" y2="321.5" stroke="#868686" stroke-width="1"/>
<line x1="1417" y1="336.5" x2="1760" y2="336.5" stroke="#868686" stroke-width="1"/>
<line x1="1417" y1="351.5" x2="1760" y2="351.5" stroke="#868686" stroke-width="1"/>
<line x1="1417" y1="366.5" x2="1760" y2="366.5" stroke="#868686" stroke-width="1"/>
<line x1="1417" y1="381.5" x2="1760" y2="381.5" stroke="#868686" stroke-width="1"/>
<line x1="1417" y1="396.5" x2="1760" y2="396.5" stroke="#868686" stroke-width="1"/>
<line x1="1417" y1="411.5" x2="1760" y2="411.5" stroke="#868686" stroke-width="1"/>
<line x1="1417" y1="426.5" x2="1760" y2="426.5" stroke="#868686" stroke-width="1"/>
<line x1="1417" y1="441.5" x2="1760" y2="441.5" stroke="#868686" stroke-width="1"/>
<line x1="1417" y1="456.5" x2="1760" y2="456.5" stroke="#868686" stroke-width="1"/>
<line x1="1417" y1="471.5" x2="1760" y2="471.5" stroke="#868686" stroke-width="1"/>
<line x1="1421.5" y1="231.5" x2="1421.5" y2="475.5" stroke="#868686" stroke-width="1"/>
<line x1="1421.5" y1="471.5" x2="1421.5" y2="475.5" stroke="#868686" stroke-width="1"/>
<line x1="1444.5" y1="471.5" x2="1444.5" y2="475.5" stroke="#868686" stroke-width="1"/>
<line x1="1466.5" y1="471.5" x2="1466.5" y2="475.5" stroke="#868686" stroke-width="1"/>
<line x1="1489.5" y1="471.5" x2="1489.5" y2="475.5" stroke="#868686" stroke-width="1"/>
<line x1="1511.5" y1="471.5" x2="1511.5" y2="475.5" stroke="#868686" stroke-width="1"/>
<line x1="1534.5" y1="471.5" x2="1534.5" y2="475.5" stroke="#868686" stroke-width="1"/>
<line x1="1557.5" y1="471.5" x2="1557.5" y2="475.5" stroke="#868686" stroke-width="1"/>
<line x1="1579.5" y1="471.5" x2="1579.5" y2="475.5" stroke="#868686" stroke-width="1"/>
<line x1="1602.5" y1="471.5" x2="1602.5" y2="475.5" stroke="#868686" stroke-width="1"/>
<line x1="1624.5" y1="471.5" x2="1624.5" y2="475.5" stroke="#868686" stroke-width="1"/>
<line x1="1647.5" y1="471.5" x2="1647.5" y2="475.5" stroke="#868686" stroke-width="1"/>
<line x1="1670.5" y1="471.5" x2="1670.5" y2="475.5" stroke="#868686" stroke-width="1"/>
<line x1="1692.5" y1="471.5" x2="1692.5" y2="475.5" stroke="#868686" stroke-width="1"/>
<line x1="1715.5" y1="471.5" x2="1715.5" y2="475.5" stroke="#868686" stroke-width="1"/>
<line x1="1737.5" y1="471.5" x2="1737.5" y2="475.5" stroke="#868686" stroke-width="1"/>
<line x1="1760.5" y1="471.5" x2="1760.5" y2="475.5" stroke="#868686" stroke-width="1"/>
<text x="1373.96" y="236.0" font-size="11" fill="#000" textLength="31.53" lengthAdjust="spacingAndGlyphs">6,600</text>
<text x="1373.96" y="251.0" font-size="11" fill="#000" textLength="31.53" lengthAdjust="spacingAndGlyphs">6,500</text>
<text x="1373.96" y="266.0" font-size="11" fill="#000" textLength="31.53" lengthAdjust="spacingAndGlyphs">6,400</text>
<text x="1373.96" y="281.0" font-size="11" fill="#000" textLength="31.53" lengthAdjust="spacingAndGlyphs">6,300</text>
<text x="1373.96" y="296.0" font-size="11" fill="#000" textLength="31.53" lengthAdjust="spacingAndGlyphs">6,200</text>
<text x="1373.96" y="311.0" font-size="11" fill="#000" textLength="31.53" lengthAdjust="spacingAndGlyphs">6,100</text>
<text x="1373.96" y="326.0" font-size="11" fill="#000" textLength="31.53" lengthAdjust="spacingAndGlyphs">6,000</text>
<text x="1374.10" y="341.0" font-size="11" fill="#000" textLength="31.39" lengthAdjust="spacingAndGlyphs">5,900</text>
<text x="1374.10" y="356.0" font-size="11" fill="#000" textLength="31.39" lengthAdjust="spacingAndGlyphs">5,800</text>
<text x="1374.10" y="371.0" font-size="11" fill="#000" textLength="31.39" lengthAdjust="spacingAndGlyphs">5,700</text>
<text x="1374.10" y="386.0" font-size="11" fill="#000" textLength="31.39" lengthAdjust="spacingAndGlyphs">5,600</text>
<text x="1374.10" y="401.0" font-size="11" fill="#000" textLength="31.39" lengthAdjust="spacingAndGlyphs">5,500</text>
<text x="1374.10" y="416.0" font-size="11" fill="#000" textLength="31.39" lengthAdjust="spacingAndGlyphs">5,400</text>
<text x="1374.10" y="431.0" font-size="11" fill="#000" textLength="31.39" lengthAdjust="spacingAndGlyphs">5,300</text>
<text x="1374.10" y="446.0" font-size="11" fill="#000" textLength="31.39" lengthAdjust="spacingAndGlyphs">5,200</text>
<text x="1374.10" y="461.0" font-size="11" fill="#000" textLength="31.39" lengthAdjust="spacingAndGlyphs">5,100</text>
<text x="1374.10" y="476.0" font-size="11" fill="#000" textLength="31.39" lengthAdjust="spacingAndGlyphs">5,000</text>
<text x="1432.8" y="493" font-size="11" text-anchor="middle" >1</text>
<text x="1455.4" y="493" font-size="11" text-anchor="middle" >2</text>
<text x="1478.0" y="493" font-size="11" text-anchor="middle" >3</text>
<text x="1500.6" y="493" font-size="11" text-anchor="middle" >4</text>
<text x="1523.2" y="493" font-size="11" text-anchor="middle" >5</text>
<text x="1545.8" y="493" font-size="11" text-anchor="middle" >6</text>
<text x="1568.4" y="493" font-size="11" text-anchor="middle" >7</text>
<text x="1591.0" y="493" font-size="11" text-anchor="middle" >8</text>
<text x="1613.6" y="493" font-size="11" text-anchor="middle" >9</text>
<text x="1636.2" y="493" font-size="11" text-anchor="middle" >10</text>
<text x="1658.8" y="493" font-size="11" text-anchor="middle" >11</text>
<text x="1681.4" y="493" font-size="11" text-anchor="middle" >12</text>
<text x="1704.0" y="493" font-size="11" text-anchor="middle" >13</text>
<text x="1726.6" y="493" font-size="11" text-anchor="middle" >14</text>
<text x="1749.2" y="493" font-size="11" text-anchor="middle" >15</text>
<polyline points="1432.8,268.9 1455.4,355.4 1478.0,434.2 1500.6,355.4 1523.2,268.9 1545.8,291.5 1568.4,355.4 1591.0,268.9 1613.6,254.0 1636.2,355.4 1658.8,434.2 1681.4,355.4 1704.0,359.0 1726.6,359.0 1749.2,312.5" fill="none" stroke="#4A7EBB" stroke-width="2.6" stroke-linejoin="round" stroke-linecap="round"/>
<polyline points="1432.8,268.9 1455.4,312.1 1478.0,360.2 1500.6,302.6 1523.2,248.9 1545.8,260.7 1568.4,326.8 1591.0,275.5 1613.6,247.7 1636.2,299.9 1658.8,349.0 1681.4,290.4 1704.0,292.6 1726.6,281.8 1749.2,252.2" fill="none" stroke="#BE4B48" stroke-width="2.6" stroke-linejoin="round" stroke-linecap="round"/>
<line x1="1781" y1="349" x2="1807" y2="349" stroke="#4A7EBB" stroke-width="2.6"/>
<line x1="1781" y1="373" x2="1807" y2="373" stroke="#BE4B48" stroke-width="2.6"/>
<text x="1808.99" y="353" font-size="11" fill="#000" textLength="35.03" lengthAdjust="spacingAndGlyphs">Precio</text>
<text x="1809.02" y="377" font-size="11" fill="#000" textLength="53.78" lengthAdjust="spacingAndGlyphs">Resultado</text>
<rect x="1900" y="168" width="20" height="954" fill="#A9C4EC" />
<rect x="1900" y="168" width="16" height="954" fill="#7E9FCE" />
<rect x="1900" y="168" width="1" height="954" fill="#5876A8" />
<rect x="1915" y="168" width="1" height="954" fill="#6f8fc0" />
<rect x="1901.5" y="169.5" width="13" height="6" fill="#fff" stroke="#7a94bc"/>
<rect x="1904" y="172" width="8" height="1" fill="#7a94bc" />
<path d="M1904 188 L1912 188 L1908 183 Z" fill="#46587e"/>
<rect x="1901.5" y="231.5" width="13" height="835" rx="1.5" fill="url(#gThumbV)" stroke="#5b73a0"/>
<rect x="1905" y="645.0" width="8" height="1" fill="#666" />
<rect x="1905" y="647.2" width="8" height="1" fill="#666" />
<rect x="1905" y="649.4" width="8" height="1" fill="#666" />
<rect x="1905" y="651.6" width="8" height="1" fill="#666" />
<path d="M1904 1111 L1912 1111 L1908 1116 Z" fill="#46587e"/>
<linearGradient id="gSB" x1="0" y1="0" x2="0" y2="1"><stop offset="0" stop-color="#7F9FD2"/><stop offset="0.35" stop-color="#9DB8E2"/><stop offset="1" stop-color="#A8C2EA"/></linearGradient>
<rect x="0" y="1122" width="1900" height="16" fill="url(#gSB)" />
<linearGradient id="gNav" x1="0" y1="0" x2="0" y2="1"><stop offset="0" stop-color="#E2ECF9"/><stop offset="0.5" stop-color="#D0DFF5"/><stop offset="1" stop-color="#BFD3EF"/></linearGradient>
<rect x="0" y="1122" width="366" height="15" fill="url(#gNav)" />
<rect x="0" y="1122" width="63" height="1" fill="#8AA8D8" />
<rect x="0" y="1137" width="1920" height="1" fill="#5A78B0" />
<path d="M7 1127 V1134 M13 1127 L9 1130.5 L13 1134 Z" stroke="#233f7a" fill="#233f7a" stroke-width="1.2"/>
<path d="M26 1127 L22 1130.5 L26 1134 Z" fill="#233f7a"/>
<path d="M36 1127 L40 1130.5 L36 1134 Z" fill="#233f7a"/>
<path d="M50 1127 L54 1130.5 L50 1134 Z M55.5 1127 V1134" stroke="#233f7a" fill="#233f7a" stroke-width="1.2"/>
<rect x="62" y="1122" width="1" height="15" fill="#8AA7D2" />
<linearGradient id="gSh" x1="0" y1="0" x2="0" y2="1"><stop offset="0" stop-color="#EEF4FC"/><stop offset="0.5" stop-color="#DCE8F8"/><stop offset="1" stop-color="#C8DAF2"/></linearGradient>
<path d="M328 1137 L342 1122.5 H364 L350 1137 Z" fill="url(#gSh)" stroke="#8AA7D2"/>
<rect x="334" y="1127" width="12" height="8" fill="#f4f6fa" stroke="#889"/><circle cx="336" cy="1126" r="2.5" fill="#f0b020"/>
<path d="M266 1137 L280 1122.5 H334 L320 1137 Z" fill="url(#gSh)" stroke="#8AA7D2"/>
<text x="280.99" y="1134" font-size="12" fill="#1e3a78" textLength="32.02" lengthAdjust="spacingAndGlyphs">Hoja5</text>
<path d="M214 1137 L228 1122.5 H282 L268 1137 Z" fill="url(#gSh)" stroke="#8AA7D2"/>
<text x="229.02" y="1134" font-size="12" fill="#1e3a78" textLength="31.34" lengthAdjust="spacingAndGlyphs">Hoja4</text>
<path d="M162 1137 L176 1122.5 H230 L216 1137 Z" fill="url(#gSh)" stroke="#8AA7D2"/>
<text x="177.01" y="1134" font-size="12" fill="#1e3a78" textLength="31.52" lengthAdjust="spacingAndGlyphs">Hoja3</text>
<path d="M110 1137 L124 1122.5 H178 L164 1137 Z" fill="url(#gSh)" stroke="#8AA7D2"/>
<text x="124.98" y="1134" font-size="12" fill="#1e3a78" textLength="32.34" lengthAdjust="spacingAndGlyphs">Hoja2</text>
<linearGradient id="gAct" x1="0" y1="0" x2="0" y2="1"><stop offset="0" stop-color="#FFFFFF"/><stop offset="0.6" stop-color="#F4F8FD"/><stop offset="1" stop-color="#D4E2F6"/></linearGradient>
<path d="M63 1122 H112 L115 1137 H63 Z" fill="url(#gAct)"/>
<path d="M63 1122 V1137" fill="none" stroke="#8AA7D2"/>
<text x="71.00" y="1134" font-size="12" font-weight="bold" fill="#1e3a78" textLength="36.68" lengthAdjust="spacingAndGlyphs">Hoja1</text>
<rect x="1143" y="1122" width="757" height="16" fill="#7E9FCE" />
<rect x="1143" y="1122" width="757" height="1" fill="#5876A8" />
<rect x="1143.5" y="1124.5" width="5" height="11" fill="#fff" stroke="#7a94bc"/>
<path d="M1158 1126 L1154 1130 L1158 1134 Z" fill="#46587e"/>
<rect x="1165.5" y="1123.5" width="634" height="13" rx="1.5" fill="url(#gThumbH)" stroke="#5b73a0"/>
<rect x="1480.0" y="1127" width="1" height="7" fill="#666" />
<rect x="1482.2" y="1127" width="1" height="7" fill="#666" />
<rect x="1484.4" y="1127" width="1" height="7" fill="#666" />
<rect x="1486.6" y="1127" width="1" height="7" fill="#666" />
<path d="M1880 1126 L1884 1130 L1880 1134 Z" fill="#46587e"/>
<rect x="1894.5" y="1124.5" width="5" height="11" fill="#fff" stroke="#7a94bc"/>
<rect x="1900" y="1122" width="20" height="16" fill="#7E9FCE" />
<rect x="1915" y="1122" width="5" height="16" fill="#A9C4EC" />
<rect x="0" y="1138" width="1920" height="22" fill="url(#gStatus)" />
<rect x="0" y="1138" width="1920" height="1" fill="#E8F0FB" />
<text x="7" y="1153" font-size="12" fill="#20305a" >Listo</text>
<rect x="39" y="1140" width="1" height="19" fill="#9EB6D8" />
<rect x="40" y="1140" width="1" height="19" fill="#F0F6FD" />
<rect x="1675" y="1140" width="1" height="19" fill="#9EB6D8" />
<rect x="1680.5" y="1141.5" width="18" height="16" fill="url(#gOrange)" stroke="#C9A050"/>
<rect x="1684" y="1144" width="11" height="10" fill="#fff" stroke="#555" stroke-width="0.8"/><path d="M1684 1147.5 H1695 M1684 1150.5 H1695 M1687.5 1144 V1154 M1691 1144 V1154" stroke="#555" stroke-width="0.7"/>
<rect x="1699.5" y="1141.5" width="18" height="16" fill="#D3E1F4" stroke="#A9BFD9"/>
<rect x="1703" y="1144" width="11" height="10" fill="#fff" stroke="#555" stroke-width="0.8"/><rect x="1705" y="1146" width="7" height="6" fill="none" stroke="#555" stroke-width="0.7"/>
<rect x="1718.5" y="1141.5" width="18" height="16" fill="#D3E1F4" stroke="#A9BFD9"/>
<rect x="1722" y="1144" width="11" height="10" fill="#fff" stroke="#555" stroke-width="0.8"/><rect x="1723" y="1145" width="4" height="5" fill="#777"/><rect x="1728" y="1145" width="4" height="5" fill="#777"/>
<text x="1744.16" y="1153" font-size="12" fill="#20305a" textLength="28.23" lengthAdjust="spacingAndGlyphs">100%</text>
<circle cx="1789" cy="1149" r="6.5" fill="#E8F0FA" stroke="#6a7fa8"/>
<rect x="1785" y="1148.5" width="8" height="1.6" fill="#333" />
<rect x="1796" y="1148" width="104" height="1" fill="#7d90b0" />
<rect x="1796" y="1149" width="104" height="1" fill="#fff" />
<rect x="1847" y="1143" width="1" height="12" fill="#888" />
<path d="M1843 1142.5 H1852 V1151 L1847.5 1155 L1843 1151 Z" fill="#F0F4FA" stroke="#6a7fa8"/>
<circle cx="1907" cy="1149" r="6.5" fill="#E8F0FA" stroke="#6a7fa8"/>
<rect x="1903" y="1148.4" width="8" height="1.8" fill="#333" />
<rect x="1906.1" y="1145" width="1.8" height="8" fill="#333" />
<rect x="0" y="1160" width="1920" height="40" fill="url(#gTask)" />
<rect x="0" y="1160" width="1920" height="1" fill="#0d1a1e" />
<rect x="0" y="1161" width="1920" height="1" fill="#5a7a80" opacity="0.5"/>
<clipPath id="clipTask"><rect x="0" y="1161" width="1920" height="39"/></clipPath>
<g clip-path="url(#clipTask)" filter="url(#fBlur)">
<path d="M640 1200 L700 1160 L760 1160 L700 1200 Z" fill="#3a6064" opacity="0.5"/>
<path d="M1000 1200 L1060 1160 L1110 1160 L1050 1200 Z" fill="#3a6064" opacity="0.5"/>
<ellipse cx="1560" cy="1168" rx="60" ry="5" fill="#0e2226" opacity="0.7"/>
<ellipse cx="1240" cy="1166" rx="50" ry="4" fill="#12282c" opacity="0.6"/>
</g>
<circle cx="26.7" cy="1180" r="18" fill="url(#gWinOrb)" stroke="#0e2a40"/>
<path d="M18 1173 Q22 1170 26 1173 L25 1179 Q21 1177 17 1179 Z" fill="#f05a28"/><path d="M27.5 1173 Q31 1171 36 1173 L35 1179 Q31 1177 26.8 1179 Z" fill="#7ac040"/>
<path d="M17 1180.5 Q21 1178.5 25 1180.5 L24 1187 Q20 1185 16 1187 Z" fill="#2aa0e8"/><path d="M26.5 1180.5 Q30.5 1179 35 1180.5 L34 1187 Q30 1185 25.8 1187 Z" fill="#f8c020"/>
<circle cx="89" cy="1181" r="11" fill="#2a8ae0"/><circle cx="89" cy="1181" r="6" fill="#1b3438"/><rect x="82" y="1179.5" width="14" height="3" fill="#2a8ae0"/>
<ellipse cx="88" cy="1180" rx="17" ry="6" fill="none" stroke="#e8b830" stroke-width="2" transform="rotate(-35 88 1180)"/>
<rect x="135" y="1170" width="32" height="24" rx="2" fill="#e8cf78" stroke="#a08a40"/><rect x="140" y="1167" width="22" height="6" fill="#f4f0e0"/>
<path d="M140 1194 V1184 H162 V1194" fill="none" stroke="#5ab0e8" stroke-width="3"/>
<rect x="199" y="1168" width="25" height="24" rx="2" fill="#5a90d0" stroke="#a8c8f0"/><circle cx="210" cy="1180" r="8" fill="#f08020"/><path d="M207 1175 L215 1180 L207 1185 Z" fill="#fff"/>
<rect x="246.5" y="1161.5" width="57" height="38" rx="2" fill="url(#gTaskBtn)" stroke="#0b1416" stroke-opacity="0.8"/>
<rect x="308.5" y="1161.5" width="53" height="38" rx="2" fill="url(#gTaskBtn)" stroke="#0b1416" stroke-opacity="0.8"/>
<rect x="370.5" y="1161.5" width="58" height="38" rx="2" fill="url(#gTaskBtn)" stroke="#0b1416" stroke-opacity="0.8"/>
<circle cx="275" cy="1181" r="13" fill="#d83a2a"/><path d="M275 1181 L262 1174 A13 13 0 0 0 270 1193.5 Z" fill="#3aa040"/><path d="M275 1181 L270 1193.5 A13 13 0 0 0 288 1176 Z" fill="#f8c818"/><circle cx="275" cy="1181" r="6" fill="#fff"/><circle cx="275" cy="1181" r="4.5" fill="#3a7ad8"/>
<rect x="320" y="1166" width="28" height="27" rx="2" fill="#2a6ad0"/><path d="M326 1174 Q334 1168 342 1175 L332 1182 L342 1182 Q334 1192 326 1186 L336 1178 L326 1178 Z" fill="#fff"/>
<rect x="383" y="1167" width="30" height="26" rx="2" fill="#f2f6ee" stroke="#4a9a40" stroke-width="1.5"/>
<rect x="393.0" y="1173.0" width="5.5" height="5.5" fill="#3a8a30" />
<rect x="399.5" y="1173.0" width="5.5" height="5.5" fill="#3a8a30" />
<rect x="406.0" y="1173.0" width="5.5" height="5.5" fill="#3a8a30" />
<rect x="393.0" y="1179.5" width="5.5" height="5.5" fill="#3a8a30" />
<rect x="399.5" y="1179.5" width="5.5" height="5.5" fill="#3a8a30" />
<rect x="406.0" y="1179.5" width="5.5" height="5.5" fill="#3a8a30" />
<rect x="393.0" y="1186.0" width="5.5" height="5.5" fill="#3a8a30" />
<rect x="399.5" y="1186.0" width="5.5" height="5.5" fill="#3a8a30" />
<rect x="406.0" y="1186.0" width="5.5" height="5.5" fill="#3a8a30" />
<rect x="379" y="1171" width="14" height="14" fill="#2a7a28"/><text x="386" y="1182" font-size="11" font-weight="bold" fill="#fff" text-anchor="middle">X</text>
<path d="M1724 1184 L1732 1184 L1728 1179 Z" fill="#fff"/>
<path d="M1747 1172 V1190 M1747 1173 H1756 L1754 1177 L1757 1181 H1747" stroke="#fff" fill="#fff" stroke-width="1.4"/>
<rect x="1771" y="1176" width="13" height="10" fill="none" stroke="#fff" stroke-width="1.5"/><rect x="1769" y="1171" width="5" height="7" fill="#fff"/><path d="M1774 1190 H1782" stroke="#fff" stroke-width="1.5"/>
<path d="M1793 1177 H1797 L1802 1172 V1190 L1797 1185 H1793 Z" fill="#fff"/><path d="M1805 1176 Q1808 1181 1805 1186 M1808 1174 Q1812 1181 1808 1188" stroke="#fff" fill="none" stroke-width="1.2"/>
<text x="1856" y="1177" font-size="12" text-anchor="middle" fill="#fff" >16:42</text>
<text x="1856" y="1193" font-size="12" text-anchor="middle" fill="#fff" >26/01/2012</text>
<rect x="1896.5" y="1161.5" width="23" height="38" fill="#3a5a60" stroke="#0d1a1e" opacity="0.8"/>
</svg></body></html>
